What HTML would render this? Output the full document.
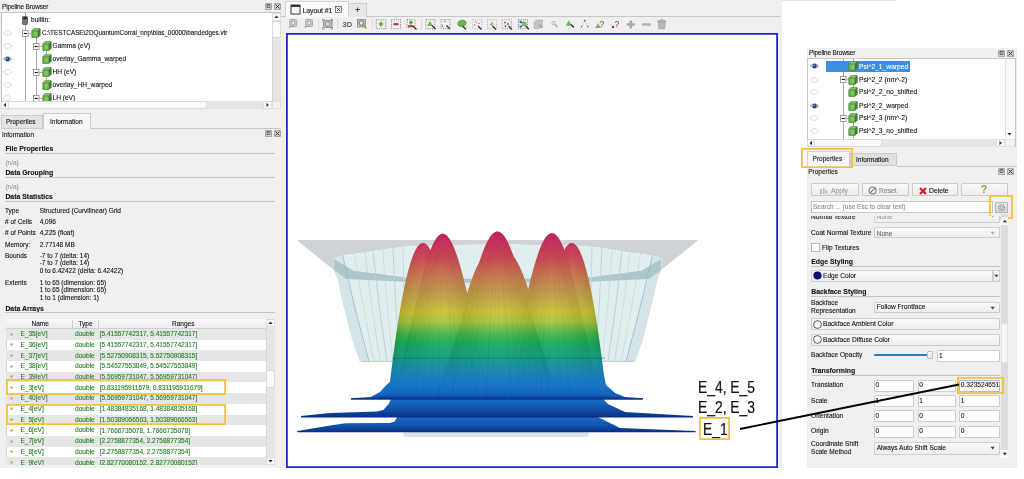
<!DOCTYPE html>
<html><head><meta charset="utf-8"><style>
html,body{margin:0;padding:0;}
body{width:1024px;height:479px;position:relative;overflow:hidden;background:#fff;font-family:"Liberation Sans", sans-serif;}
.t{position:absolute;white-space:nowrap;line-height:1;-webkit-text-stroke:0.1px currentColor;}
.r{position:absolute;}
svg.r{overflow:visible}
</style></head><body>
<div id="root" style="position:absolute;left:0;top:0;width:1024px;height:479px;will-change:transform">
<div class="r" style="left:0.00px;top:0.00px;width:782.00px;height:468.00px;background:#f0f0f0"></div>
<div class="r" style="left:782.00px;top:0.00px;width:114.00px;height:0.80px;background:#e6e6e6"></div>
<div class="t" style="left:2.00px;top:3.58px;font-size:6.4px;color:#111;font-weight:normal;letter-spacing:-0.1px;">Pipeline Browser</div>
<div class="r" style="left:265.00px;top:3.00px;width:7.00px;height:7.00px;background:#d4d4d4;border-radius:1.5px;box-shadow:inset 0 0 0 0.8px #9a9a9a"></div>
<div class="r" style="left:273.50px;top:3.00px;width:7.00px;height:7.00px;background:#d4d4d4;border-radius:1.5px;box-shadow:inset 0 0 0 0.8px #9a9a9a"></div>
<svg class="r" style="left:265px;top:3px" width="16" height="7"><path d="M2 4.5h3v-3h-3z M2 3.5l2.5-2" stroke="#555" stroke-width="0.8" fill="none"/><path d="M10.5 1.5l4 4M14.5 1.5l-4 4" stroke="#333" stroke-width="1"/></svg>
<div class="r" style="left:0.00px;top:11.50px;width:281.00px;height:1.00px;background:#dcdcdc"></div>
<div class="r" style="left:1.00px;top:12.00px;width:280.00px;height:97.00px;background:#fff;box-shadow:inset 0 0 0 1px #c4c4c4"></div>
<div class="r" style="left:272.00px;top:12.50px;width:9.00px;height:88.50px;background:#e6e6e6;box-shadow:inset 1px 0 0 #d8d8d8"></div>
<div class="r" style="left:272.00px;top:20.50px;width:9.00px;height:17.50px;background:#fafafa;box-shadow:inset 0 0 0 0.7px #d0d0d0"></div>
<div class="r" style="left:272.00px;top:12.50px;width:9.00px;height:8.00px;background:#fafafa;box-shadow:inset 0 0 0 0.7px #d4d4d4"></div>
<svg class="r" style="left:272px;top:12.5px" width="9" height="8"><path d="M2.3 5h4.4l-2.2-2.4z" fill="#333"/></svg>
<div class="r" style="left:1.00px;top:101.00px;width:271.00px;height:8.00px;background:#e6e6e6"></div>
<div class="r" style="left:8.00px;top:101.00px;width:199.00px;height:8.00px;background:#fafafa;box-shadow:inset 0 0 0 0.7px #d0d0d0"></div>
<div class="r" style="left:1.00px;top:101.00px;width:8.00px;height:8.00px;background:#fafafa;box-shadow:inset 0 0 0 0.7px #d4d4d4"></div>
<svg class="r" style="left:1px;top:101px" width="8" height="8"><path d="M5 1.7999999999999998v4.4l-2.4-2.2z" fill="#333"/></svg>
<div class="r" style="left:263.00px;top:101.00px;width:9.00px;height:8.00px;background:#fafafa;box-shadow:inset 0 0 0 0.7px #d4d4d4"></div>
<svg class="r" style="left:263px;top:101px" width="9" height="8"><path d="M3.5 1.7999999999999998v4.4l2.4-2.2z" fill="#333"/></svg>
<div class="r" style="left:272.00px;top:101.00px;width:9.00px;height:8.00px;background:#f2f2f2;box-shadow:inset 0 0 0 0.6px #d0d0d0"></div>
<div class="r" style="left:25.00px;top:12.00px;width:0.80px;height:89.00px;background:#a8a8a8"></div>
<div class="r" style="left:36.00px;top:37.00px;width:0.80px;height:64.00px;background:#a8a8a8"></div>
<div class="r" style="left:46.00px;top:51.00px;width:0.80px;height:8.00px;background:#a8a8a8"></div>
<div class="r" style="left:46.00px;top:77.00px;width:0.80px;height:8.00px;background:#a8a8a8"></div>
<svg class="r" style="left:22px;top:15.5px" width="6" height="9"><rect x="0.5" y="0.5" width="5" height="8" rx="0.8" fill="#777" stroke="#333" stroke-width="0.6"/><rect x="1.3" y="1.2" width="3.4" height="2" fill="#222"/></svg>
<div class="t" style="left:31.00px;top:17.21px;font-size:6.6px;color:#111;font-weight:normal;letter-spacing:0px;">builtin:</div>
<svg class="r" style="left:3px;top:29px" width="9" height="8"><ellipse cx="4.5" cy="4" rx="3.6" ry="2.3" fill="none" stroke="#b8b8b8" stroke-width="0.8" stroke-dasharray="1.2 0.6"/></svg>
<svg class="r" style="left:22px;top:29.5px" width="10" height="7"><path d="M6 3.5H9.5" stroke="#999" stroke-width="0.8"/><rect x="0.5" y="0.5" width="5.5" height="6" fill="#fff" stroke="#888" stroke-width="0.8"/><path d="M1.7 3.5H4.8" stroke="#111" stroke-width="1.1"/></svg>
<svg class="r" style="left:31px;top:28px" width="10" height="10"><path d="M0.8 2.6L3 0.6H9.2V7.2L7 9.4H0.8z" fill="#4f8f3a" stroke="#3c6e2c" stroke-width="0.5"/><path d="M0.8 2.6H7V9.4H0.8z" fill="#5ea846"/><path d="M2.5 4H6.2V8.4H2.5z" fill="#7cc65a"/><path d="M7 2.6L9.2 0.6V7.2L7 9.4z" fill="#3f7a2e"/><path d="M0.8 2.6L3 0.6H9.2L7 2.6z" fill="#86b872"/></svg>
<div class="t" style="left:42.00px;top:30.42px;font-size:6.35px;color:#111;font-weight:normal;letter-spacing:0px;">C:\TESTCASE\2DQuantumCorral_nnp\bias_00000\bandedges.vtr</div>
<svg class="r" style="left:3px;top:42px" width="9" height="8"><ellipse cx="4.5" cy="4" rx="3.6" ry="2.3" fill="none" stroke="#b8b8b8" stroke-width="0.8" stroke-dasharray="1.2 0.6"/></svg>
<svg class="r" style="left:33px;top:42.5px" width="10" height="7"><path d="M6 3.5H9.5" stroke="#999" stroke-width="0.8"/><rect x="0.5" y="0.5" width="5.5" height="6" fill="#fff" stroke="#888" stroke-width="0.8"/><path d="M1.7 3.5H4.8" stroke="#111" stroke-width="1.1"/></svg>
<svg class="r" style="left:42px;top:41px" width="10" height="10"><path d="M0.8 2.6L3 0.6H9.2V7.2L7 9.4H0.8z" fill="#4f8f3a" stroke="#3c6e2c" stroke-width="0.5"/><path d="M0.8 2.6H7V9.4H0.8z" fill="#5ea846"/><path d="M2.5 4H6.2V8.4H2.5z" fill="#7cc65a"/><path d="M7 2.6L9.2 0.6V7.2L7 9.4z" fill="#3f7a2e"/><path d="M0.8 2.6L3 0.6H9.2L7 2.6z" fill="#86b872"/></svg>
<div class="t" style="left:52.50px;top:43.21px;font-size:6.6px;color:#111;font-weight:normal;letter-spacing:0px;">Gamma (eV)</div>
<svg class="r" style="left:3px;top:55px" width="9" height="8"><path d="M0.5 4Q4.5 -0.5 8.5 4Q4.5 8.5 0.5 4z" fill="#e8eef5" stroke="#445" stroke-width="0.6"/><circle cx="4.6" cy="4" r="2.1" fill="#123a70"/><circle cx="4.2" cy="3.5" r="0.7" fill="#9cf"/></svg>
<svg class="r" style="left:42px;top:54px" width="10" height="10"><path d="M0.8 2.6L3 0.6H9.2V7.2L7 9.4H0.8z" fill="#4f8f3a" stroke="#3c6e2c" stroke-width="0.5"/><path d="M0.8 2.6H7V9.4H0.8z" fill="#5ea846"/><path d="M2.5 4H6.2V8.4H2.5z" fill="#7cc65a"/><path d="M7 2.6L9.2 0.6V7.2L7 9.4z" fill="#3f7a2e"/><path d="M0.8 2.6L3 0.6H9.2L7 2.6z" fill="#86b872"/></svg>
<div class="t" style="left:52.50px;top:56.21px;font-size:6.6px;color:#111;font-weight:normal;letter-spacing:0px;">overlay_Gamma_warped</div>
<svg class="r" style="left:3px;top:68px" width="9" height="8"><ellipse cx="4.5" cy="4" rx="3.6" ry="2.3" fill="none" stroke="#b8b8b8" stroke-width="0.8" stroke-dasharray="1.2 0.6"/></svg>
<svg class="r" style="left:33px;top:68.5px" width="10" height="7"><path d="M6 3.5H9.5" stroke="#999" stroke-width="0.8"/><rect x="0.5" y="0.5" width="5.5" height="6" fill="#fff" stroke="#888" stroke-width="0.8"/><path d="M1.7 3.5H4.8" stroke="#111" stroke-width="1.1"/></svg>
<svg class="r" style="left:42px;top:67px" width="10" height="10"><path d="M0.8 2.6L3 0.6H9.2V7.2L7 9.4H0.8z" fill="#4f8f3a" stroke="#3c6e2c" stroke-width="0.5"/><path d="M0.8 2.6H7V9.4H0.8z" fill="#5ea846"/><path d="M2.5 4H6.2V8.4H2.5z" fill="#7cc65a"/><path d="M7 2.6L9.2 0.6V7.2L7 9.4z" fill="#3f7a2e"/><path d="M0.8 2.6L3 0.6H9.2L7 2.6z" fill="#86b872"/></svg>
<div class="t" style="left:52.50px;top:69.21px;font-size:6.6px;color:#111;font-weight:normal;letter-spacing:0px;">HH (eV)</div>
<svg class="r" style="left:3px;top:81px" width="9" height="8"><ellipse cx="4.5" cy="4" rx="3.6" ry="2.3" fill="none" stroke="#b8b8b8" stroke-width="0.8" stroke-dasharray="1.2 0.6"/></svg>
<svg class="r" style="left:42px;top:80px" width="10" height="10"><path d="M0.8 2.6L3 0.6H9.2V7.2L7 9.4H0.8z" fill="#4f8f3a" stroke="#3c6e2c" stroke-width="0.5"/><path d="M0.8 2.6H7V9.4H0.8z" fill="#5ea846"/><path d="M2.5 4H6.2V8.4H2.5z" fill="#7cc65a"/><path d="M7 2.6L9.2 0.6V7.2L7 9.4z" fill="#3f7a2e"/><path d="M0.8 2.6L3 0.6H9.2L7 2.6z" fill="#86b872"/></svg>
<div class="t" style="left:52.50px;top:82.21px;font-size:6.6px;color:#111;font-weight:normal;letter-spacing:0px;">overlay_HH_warped</div>
<div class="r" style="left:1px;top:92px;width:271px;height:9px;overflow:hidden">
<div class="r" style="left:-1px;top:-92px;width:300px;height:200px">
<svg class="r" style="left:3px;top:94px" width="9" height="8"><ellipse cx="4.5" cy="4" rx="3.6" ry="2.3" fill="none" stroke="#b8b8b8" stroke-width="0.8" stroke-dasharray="1.2 0.6"/></svg>
<svg class="r" style="left:33px;top:94.5px" width="10" height="7"><path d="M6 3.5H9.5" stroke="#999" stroke-width="0.8"/><rect x="0.5" y="0.5" width="5.5" height="6" fill="#fff" stroke="#888" stroke-width="0.8"/><path d="M1.7 3.5H4.8" stroke="#111" stroke-width="1.1"/></svg>
<svg class="r" style="left:42px;top:93px" width="10" height="10"><path d="M0.8 2.6L3 0.6H9.2V7.2L7 9.4H0.8z" fill="#4f8f3a" stroke="#3c6e2c" stroke-width="0.5"/><path d="M0.8 2.6H7V9.4H0.8z" fill="#5ea846"/><path d="M2.5 4H6.2V8.4H2.5z" fill="#7cc65a"/><path d="M7 2.6L9.2 0.6V7.2L7 9.4z" fill="#3f7a2e"/><path d="M0.8 2.6L3 0.6H9.2L7 2.6z" fill="#86b872"/></svg>
<div class="t" style="left:52.50px;top:95.21px;font-size:6.6px;color:#111;font-weight:normal;letter-spacing:0px;">LH (eV)</div>
</div></div>
<div class="r" style="left:91.00px;top:128.00px;width:190.00px;height:0.80px;background:#c8c8c8"></div>
<div class="r" style="left:1.00px;top:114.50px;width:42.00px;height:14.00px;background:#e3e3e3;box-shadow:inset 0 0 0 0.8px #c4c4c4"></div>
<div class="r" style="left:43.00px;top:112.50px;width:48.00px;height:16.00px;background:#f7f7f7;box-shadow:inset 0.8px 0.8px 0 #c4c4c4,inset -0.8px 0 0 #c4c4c4"></div>
<div class="t" style="left:6.00px;top:118.70px;font-size:6.5px;color:#111;font-weight:normal;letter-spacing:0px;">Properties</div>
<div class="t" style="left:50.00px;top:118.50px;font-size:6.5px;color:#111;font-weight:normal;letter-spacing:0px;">Information</div>
<div class="t" style="left:2.00px;top:131.78px;font-size:6.4px;color:#111;font-weight:normal;letter-spacing:0px;">Information</div>
<div class="r" style="left:265.00px;top:130.00px;width:7.00px;height:7.00px;background:#d4d4d4;border-radius:1.5px;box-shadow:inset 0 0 0 0.8px #9a9a9a"></div>
<div class="r" style="left:273.50px;top:130.00px;width:7.00px;height:7.00px;background:#d4d4d4;border-radius:1.5px;box-shadow:inset 0 0 0 0.8px #9a9a9a"></div>
<svg class="r" style="left:265px;top:130px" width="16" height="7"><path d="M2 4.5h3v-3h-3z M2 3.5l2.5-2" stroke="#555" stroke-width="0.8" fill="none"/><path d="M10.5 1.5l4 4M14.5 1.5l-4 4" stroke="#333" stroke-width="1"/></svg>
<div class="t" style="left:5.40px;top:146.16px;font-size:6.9px;color:#111;font-weight:bold;letter-spacing:0px;">File Properties</div>
<div class="r" style="left:5.40px;top:152.80px;width:269.50px;height:1.00px;background:#c4c4c4"></div>
<div class="t" style="left:5.40px;top:159.50px;font-size:6.5px;color:#999;font-weight:normal;letter-spacing:0px;">(n/a)</div>
<div class="t" style="left:5.40px;top:170.16px;font-size:6.9px;color:#111;font-weight:bold;letter-spacing:0px;">Data Grouping</div>
<div class="r" style="left:5.40px;top:176.80px;width:269.50px;height:1.00px;background:#c4c4c4"></div>
<div class="t" style="left:5.40px;top:183.80px;font-size:6.5px;color:#999;font-weight:normal;letter-spacing:0px;">(n/a)</div>
<div class="t" style="left:5.40px;top:194.16px;font-size:6.9px;color:#111;font-weight:bold;letter-spacing:0px;">Data Statistics</div>
<div class="r" style="left:5.40px;top:200.80px;width:269.50px;height:1.00px;background:#c4c4c4"></div>
<div class="t" style="left:5.00px;top:207.70px;font-size:6.5px;color:#111;font-weight:normal;letter-spacing:0px;">Type</div>
<div class="t" style="left:39.70px;top:207.70px;font-size:6.5px;color:#111;font-weight:normal;letter-spacing:0px;">Structured (Curvilinear) Grid</div>
<div class="t" style="left:5.00px;top:219.00px;font-size:6.5px;color:#111;font-weight:normal;letter-spacing:0px;"># of Cells</div>
<div class="t" style="left:39.70px;top:219.00px;font-size:6.5px;color:#111;font-weight:normal;letter-spacing:0px;">4,096</div>
<div class="t" style="left:5.00px;top:230.30px;font-size:6.5px;color:#111;font-weight:normal;letter-spacing:0px;"># of Points</div>
<div class="t" style="left:39.70px;top:230.30px;font-size:6.5px;color:#111;font-weight:normal;letter-spacing:0px;">4,225 (float)</div>
<div class="t" style="left:5.00px;top:241.50px;font-size:6.5px;color:#111;font-weight:normal;letter-spacing:0px;">Memory:</div>
<div class="t" style="left:39.70px;top:241.50px;font-size:6.5px;color:#111;font-weight:normal;letter-spacing:0px;">2.77148 MB</div>
<div class="t" style="left:5.00px;top:252.70px;font-size:6.5px;color:#111;font-weight:normal;letter-spacing:0px;">Bounds</div>
<div class="t" style="left:39.70px;top:252.70px;font-size:6.5px;color:#111;font-weight:normal;letter-spacing:0px;">-7 to 7 (delta: 14)</div>
<div class="t" style="left:5.00px;top:260.30px;font-size:6.5px;color:#111;font-weight:normal;letter-spacing:0px;"></div>
<div class="t" style="left:39.70px;top:260.30px;font-size:6.5px;color:#111;font-weight:normal;letter-spacing:0px;">-7 to 7 (delta: 14)</div>
<div class="t" style="left:5.00px;top:268.10px;font-size:6.5px;color:#111;font-weight:normal;letter-spacing:0px;"></div>
<div class="t" style="left:39.70px;top:268.10px;font-size:6.5px;color:#111;font-weight:normal;letter-spacing:0px;">0 to 6.42422 (delta: 6.42422)</div>
<div class="t" style="left:5.00px;top:279.60px;font-size:6.5px;color:#111;font-weight:normal;letter-spacing:0px;">Extents</div>
<div class="t" style="left:39.70px;top:279.60px;font-size:6.5px;color:#111;font-weight:normal;letter-spacing:0px;">1 to 65 (dimension: 65)</div>
<div class="t" style="left:5.00px;top:287.10px;font-size:6.5px;color:#111;font-weight:normal;letter-spacing:0px;"></div>
<div class="t" style="left:39.70px;top:287.10px;font-size:6.5px;color:#111;font-weight:normal;letter-spacing:0px;">1 to 65 (dimension: 65)</div>
<div class="t" style="left:5.00px;top:295.10px;font-size:6.5px;color:#111;font-weight:normal;letter-spacing:0px;"></div>
<div class="t" style="left:39.70px;top:295.10px;font-size:6.5px;color:#111;font-weight:normal;letter-spacing:0px;">1 to 1 (dimension: 1)</div>
<div class="t" style="left:5.40px;top:305.66px;font-size:6.9px;color:#111;font-weight:bold;letter-spacing:0px;">Data Arrays</div>
<div class="r" style="left:5.40px;top:312.30px;width:269.50px;height:1.00px;background:#c4c4c4"></div>
<div class="r" style="left:5.70px;top:318.50px;width:269.30px;height:146.50px;background:#fff;box-shadow:inset 0 0 0 0.8px #c8c8c8"></div>
<div class="r" style="left:5.70px;top:318.50px;width:260.30px;height:10.20px;background:linear-gradient(#f8f8f8,#ececec);box-shadow:inset 0 -0.8px 0 #c8c8c8"></div>
<div class="r" style="left:72.00px;top:319.50px;width:0.80px;height:9.00px;background:#d0d0d0"></div>
<div class="r" style="left:98.00px;top:319.50px;width:0.80px;height:9.00px;background:#d0d0d0"></div>
<div class="t" style="left:31.50px;top:320.70px;font-size:6.5px;color:#111;font-weight:normal;letter-spacing:0px;">Name</div>
<div class="t" style="left:78.50px;top:320.70px;font-size:6.5px;color:#111;font-weight:normal;letter-spacing:0px;">Type</div>
<div class="t" style="left:172.00px;top:320.70px;font-size:6.5px;color:#111;font-weight:normal;letter-spacing:0px;">Ranges</div>
<div class="r" style="left:5.7px;top:328.7px;width:260.3px;height:136.3px;overflow:hidden">
<div class="r" style="left:0.00px;top:0.30px;width:260.30px;height:10.70px;background:#e6e6e6"></div>
<svg class="r" style="left:4.8px;top:3.9000000000000115px" width="3" height="3"><circle cx="1.5" cy="1.5" r="1.3" fill="#c0a860"/></svg>
<div class="t" style="left:14.70px;top:2.51px;font-size:6.6px;color:#1f801f;font-weight:normal;letter-spacing:0px;">E_35[eV]</div>
<div class="t" style="left:69.30px;top:2.51px;font-size:6.6px;color:#1f801f;font-weight:normal;letter-spacing:0px;">double</div>
<div class="t" style="left:94.00px;top:2.60px;font-size:6.5px;color:#1f801f;font-weight:normal;letter-spacing:0px;">[5.41557742317, 5.41557742317]</div>
<svg class="r" style="left:4.8px;top:14.6px" width="3" height="3"><circle cx="1.5" cy="1.5" r="1.3" fill="#c0a860"/></svg>
<div class="t" style="left:14.70px;top:13.21px;font-size:6.6px;color:#1f801f;font-weight:normal;letter-spacing:0px;">E_36[eV]</div>
<div class="t" style="left:69.30px;top:13.21px;font-size:6.6px;color:#1f801f;font-weight:normal;letter-spacing:0px;">double</div>
<div class="t" style="left:94.00px;top:13.30px;font-size:6.5px;color:#1f801f;font-weight:normal;letter-spacing:0px;">[5.41557742317, 5.41557742317]</div>
<div class="r" style="left:0.00px;top:21.70px;width:260.30px;height:10.70px;background:#e6e6e6"></div>
<svg class="r" style="left:4.8px;top:25.29999999999999px" width="3" height="3"><circle cx="1.5" cy="1.5" r="1.3" fill="#c0a860"/></svg>
<div class="t" style="left:14.70px;top:23.91px;font-size:6.6px;color:#1f801f;font-weight:normal;letter-spacing:0px;">E_37[eV]</div>
<div class="t" style="left:69.30px;top:23.91px;font-size:6.6px;color:#1f801f;font-weight:normal;letter-spacing:0px;">double</div>
<div class="t" style="left:94.00px;top:24.00px;font-size:6.5px;color:#1f801f;font-weight:normal;letter-spacing:0px;">[5.52750908315, 5.52750908315]</div>
<svg class="r" style="left:4.8px;top:36.000000000000036px" width="3" height="3"><circle cx="1.5" cy="1.5" r="1.3" fill="#c0a860"/></svg>
<div class="t" style="left:14.70px;top:34.61px;font-size:6.6px;color:#1f801f;font-weight:normal;letter-spacing:0px;">E_38[eV]</div>
<div class="t" style="left:69.30px;top:34.61px;font-size:6.6px;color:#1f801f;font-weight:normal;letter-spacing:0px;">double</div>
<div class="t" style="left:94.00px;top:34.70px;font-size:6.5px;color:#1f801f;font-weight:normal;letter-spacing:0px;">[5.54527553849, 5.54527553849]</div>
<div class="r" style="left:0.00px;top:43.10px;width:260.30px;height:10.70px;background:#e6e6e6"></div>
<svg class="r" style="left:4.8px;top:46.700000000000024px" width="3" height="3"><circle cx="1.5" cy="1.5" r="1.3" fill="#c0a860"/></svg>
<div class="t" style="left:14.70px;top:45.31px;font-size:6.6px;color:#1f801f;font-weight:normal;letter-spacing:0px;">E_39[eV]</div>
<div class="t" style="left:69.30px;top:45.31px;font-size:6.6px;color:#1f801f;font-weight:normal;letter-spacing:0px;">double</div>
<div class="t" style="left:94.00px;top:45.40px;font-size:6.5px;color:#1f801f;font-weight:normal;letter-spacing:0px;">[5.56959731047, 5.56959731047]</div>
<svg class="r" style="left:4.8px;top:57.40000000000001px" width="3" height="3"><circle cx="1.5" cy="1.5" r="1.3" fill="#c0a860"/></svg>
<div class="t" style="left:14.70px;top:56.01px;font-size:6.6px;color:#1f801f;font-weight:normal;letter-spacing:0px;">E_3[eV]</div>
<div class="t" style="left:69.30px;top:56.01px;font-size:6.6px;color:#1f801f;font-weight:normal;letter-spacing:0px;">double</div>
<div class="t" style="left:94.00px;top:56.10px;font-size:6.5px;color:#1f801f;font-weight:normal;letter-spacing:0px;">[0.831195911679, 0.831195911679]</div>
<div class="r" style="left:0.00px;top:64.50px;width:260.30px;height:10.70px;background:#e6e6e6"></div>
<svg class="r" style="left:4.8px;top:68.1px" width="3" height="3"><circle cx="1.5" cy="1.5" r="1.3" fill="#c0a860"/></svg>
<div class="t" style="left:14.70px;top:66.71px;font-size:6.6px;color:#1f801f;font-weight:normal;letter-spacing:0px;">E_40[eV]</div>
<div class="t" style="left:69.30px;top:66.71px;font-size:6.6px;color:#1f801f;font-weight:normal;letter-spacing:0px;">double</div>
<div class="t" style="left:94.00px;top:66.80px;font-size:6.5px;color:#1f801f;font-weight:normal;letter-spacing:0px;">[5.56959731047, 5.56959731047]</div>
<svg class="r" style="left:4.8px;top:78.79999999999998px" width="3" height="3"><circle cx="1.5" cy="1.5" r="1.3" fill="#c0a860"/></svg>
<div class="t" style="left:14.70px;top:77.41px;font-size:6.6px;color:#1f801f;font-weight:normal;letter-spacing:0px;">E_4[eV]</div>
<div class="t" style="left:69.30px;top:77.41px;font-size:6.6px;color:#1f801f;font-weight:normal;letter-spacing:0px;">double</div>
<div class="t" style="left:94.00px;top:77.50px;font-size:6.5px;color:#1f801f;font-weight:normal;letter-spacing:0px;">[1.48384835168, 1.48384835168]</div>
<div class="r" style="left:0.00px;top:85.90px;width:260.30px;height:10.70px;background:#e6e6e6"></div>
<svg class="r" style="left:4.8px;top:89.50000000000003px" width="3" height="3"><circle cx="1.5" cy="1.5" r="1.3" fill="#c0a860"/></svg>
<div class="t" style="left:14.70px;top:88.11px;font-size:6.6px;color:#1f801f;font-weight:normal;letter-spacing:0px;">E_5[eV]</div>
<div class="t" style="left:69.30px;top:88.11px;font-size:6.6px;color:#1f801f;font-weight:normal;letter-spacing:0px;">double</div>
<div class="t" style="left:94.00px;top:88.20px;font-size:6.5px;color:#1f801f;font-weight:normal;letter-spacing:0px;">[1.50389066563, 1.50389066563]</div>
<svg class="r" style="left:4.8px;top:100.20000000000002px" width="3" height="3"><circle cx="1.5" cy="1.5" r="1.3" fill="#c0a860"/></svg>
<div class="t" style="left:14.70px;top:98.81px;font-size:6.6px;color:#1f801f;font-weight:normal;letter-spacing:0px;">E_6[eV]</div>
<div class="t" style="left:69.30px;top:98.81px;font-size:6.6px;color:#1f801f;font-weight:normal;letter-spacing:0px;">double</div>
<div class="t" style="left:94.00px;top:98.90px;font-size:6.5px;color:#1f801f;font-weight:normal;letter-spacing:0px;">[1.7666735078, 1.7666735078]</div>
<div class="r" style="left:0.00px;top:107.30px;width:260.30px;height:10.70px;background:#e6e6e6"></div>
<svg class="r" style="left:4.8px;top:110.9px" width="3" height="3"><circle cx="1.5" cy="1.5" r="1.3" fill="#c0a860"/></svg>
<div class="t" style="left:14.70px;top:109.51px;font-size:6.6px;color:#1f801f;font-weight:normal;letter-spacing:0px;">E_7[eV]</div>
<div class="t" style="left:69.30px;top:109.51px;font-size:6.6px;color:#1f801f;font-weight:normal;letter-spacing:0px;">double</div>
<div class="t" style="left:94.00px;top:109.60px;font-size:6.5px;color:#1f801f;font-weight:normal;letter-spacing:0px;">[2.2758877354, 2.2758877354]</div>
<svg class="r" style="left:4.8px;top:121.6px" width="3" height="3"><circle cx="1.5" cy="1.5" r="1.3" fill="#c0a860"/></svg>
<div class="t" style="left:14.70px;top:120.21px;font-size:6.6px;color:#1f801f;font-weight:normal;letter-spacing:0px;">E_8[eV]</div>
<div class="t" style="left:69.30px;top:120.21px;font-size:6.6px;color:#1f801f;font-weight:normal;letter-spacing:0px;">double</div>
<div class="t" style="left:94.00px;top:120.30px;font-size:6.5px;color:#1f801f;font-weight:normal;letter-spacing:0px;">[2.2758877354, 2.2758877354]</div>
<div class="r" style="left:0.00px;top:128.70px;width:260.30px;height:10.70px;background:#e6e6e6"></div>
<svg class="r" style="left:4.8px;top:132.29999999999998px" width="3" height="3"><circle cx="1.5" cy="1.5" r="1.3" fill="#c0a860"/></svg>
<div class="t" style="left:14.70px;top:130.91px;font-size:6.6px;color:#1f801f;font-weight:normal;letter-spacing:0px;">E_9[eV]</div>
<div class="t" style="left:69.30px;top:130.91px;font-size:6.6px;color:#1f801f;font-weight:normal;letter-spacing:0px;">double</div>
<div class="t" style="left:94.00px;top:131.00px;font-size:6.5px;color:#1f801f;font-weight:normal;letter-spacing:0px;">[2.82770080152, 2.82770080152]</div>
</div>
<div class="r" style="left:266.00px;top:318.50px;width:9.00px;height:146.50px;background:#e6e6e6;box-shadow:inset 1px 0 0 #d8d8d8"></div>
<div class="r" style="left:266.00px;top:370.00px;width:9.00px;height:18.00px;background:#fafafa;box-shadow:inset 0 0 0 0.7px #d0d0d0"></div>
<div class="r" style="left:266.00px;top:318.50px;width:9.00px;height:8.00px;background:#fafafa;box-shadow:inset 0 0 0 0.7px #d4d4d4"></div>
<svg class="r" style="left:266px;top:318.5px" width="9" height="8"><path d="M2.3 5h4.4l-2.2-2.4z" fill="#333"/></svg>
<div class="r" style="left:266.00px;top:456.50px;width:9.00px;height:8.50px;background:#fafafa;box-shadow:inset 0 0 0 0.7px #d4d4d4"></div>
<svg class="r" style="left:266px;top:456.5px" width="9" height="8"><path d="M2.3 3h4.4l-2.2 2.4z" fill="#333"/></svg>
<div class="r" style="left:5.70px;top:379.30px;width:220.00px;height:15.30px;box-shadow:inset 0 0 0 1.8px #f2c23c"></div>
<div class="r" style="left:5.70px;top:404.00px;width:220.00px;height:20.60px;box-shadow:inset 0 0 0 1.8px #f2c23c"></div>
<div class="r" style="left:367.00px;top:16.00px;width:413.00px;height:0.80px;background:#c8c8c8"></div>
<div class="r" style="left:281.00px;top:16.00px;width:4.00px;height:0.80px;background:#c8c8c8"></div>
<div class="r" style="left:285.00px;top:1.00px;width:64.00px;height:16.00px;background:#fbfbfb;box-shadow:inset 0.8px 0.8px 0 #c8c8c8,inset -0.8px 0 0 #c8c8c8"></div>
<div class="r" style="left:349.00px;top:2.50px;width:18.00px;height:14.00px;background:#e8e8e8;box-shadow:inset 0 0.8px 0 #c8c8c8,inset -0.8px 0 0 #c8c8c8"></div>
<svg class="r" style="left:290px;top:3.5px" width="11" height="11"><rect x="1" y="1" width="9" height="9" fill="none" stroke="#333" stroke-width="1"/><rect x="1" y="1" width="9" height="2" fill="#333"/></svg>
<div class="t" style="left:302.50px;top:7.07px;font-size:7px;color:#111;font-weight:normal;letter-spacing:-0.1px;">Layout #1</div>
<svg class="r" style="left:334.5px;top:6px" width="7" height="7"><rect x="0.5" y="0.5" width="6" height="6" fill="#f4f4f4" stroke="#555" stroke-width="0.7"/><path d="M1.8 1.8l3.4 3.4M5.2 1.8l-3.4 3.4" stroke="#333" stroke-width="0.8"/></svg>
<div class="t" style="left:355.30px;top:6.40px;font-size:8.5px;color:#111;font-weight:normal;letter-spacing:0px;">+</div>
<svg class="r" style="left:0;top:0" width="1024" height="40"><rect x="289.7" y="19.5" width="7" height="7" rx="1" fill="#c8c8c8" stroke="#a8a8a8" stroke-width="0.9"/><circle cx="293.2" cy="23" r="1.8" fill="#e8e8e8" stroke="#999" stroke-width="0.7"/><path d="M288.7 27.8 q2 -2.5 4.5 -1" stroke="#999" stroke-width="1.1" fill="none"/><rect x="305.5" y="19.5" width="7" height="7" rx="1" fill="#c8c8c8" stroke="#a8a8a8" stroke-width="0.9"/><circle cx="309" cy="23" r="1.8" fill="#e8e8e8" stroke="#999" stroke-width="0.7"/><path d="M304.5 27.8 q2 -2.5 4.5 -1" stroke="#999" stroke-width="1.1" fill="none"/><rect x="318.3" y="19" width="0.8" height="10" fill="#d4d4d4"/><rect x="323.5" y="20.5" width="8.5" height="7" rx="1" fill="#b8b8b8" stroke="#8a8a8a" stroke-width="0.9"/><circle cx="327.7" cy="24" r="2" fill="#e8e8e8" stroke="#777" stroke-width="0.7"/><path d="M322.5 21.5v-2h2M330.5 19.5h2v2M332.5 27v2h-2M324.5 29h-2v-2" stroke="#666" stroke-width="0.6" fill="none"/><rect x="337.4" y="19" width="0.8" height="10" fill="#d4d4d4"/><text x="342.5" y="27.2" font-family="Liberation Sans" font-weight="bold" font-size="7.6" fill="#5a5a5a">3D</text><rect x="357.5" y="19.5" width="8" height="7.5" fill="#b8bcc4" stroke="#8a8a8a" stroke-width="0.8"/><circle cx="361.3" cy="23" r="2.2" fill="#dfe6ee" stroke="#666" stroke-width="0.8"/><path d="M363 24.8l3.4 3.6" stroke="#b89030" stroke-width="1.5"/><rect x="371.8" y="19" width="0.8" height="10" fill="#d4d4d4"/><rect x="376.3" y="19.7" width="9.5" height="9" fill="none" stroke="#777" stroke-width="0.9" stroke-dasharray="1 1.2"/><path d="M381 21.3l2.6 2.8 -2.6 2.8 -2.6 -2.8z" fill="#78b050"/><rect x="391.5" y="19.7" width="9" height="9" fill="none" stroke="#777" stroke-width="0.9" stroke-dasharray="1 1.2"/><rect x="393.5" y="23.2" width="5" height="2" fill="#d02030"/><rect x="407.0" y="19.7" width="8" height="8" fill="none" stroke="#777" stroke-width="0.9" stroke-dasharray="1 1.2"/><path d="M409 22.5h4M411 20.5v4" stroke="#58a040" stroke-width="1.6"/><rect x="408" y="25.2" width="5" height="1.8" fill="#c03030"/><path d="M413 26l3.5 3.5" stroke="#333" stroke-width="1.3"/><rect x="421.3" y="19" width="0.8" height="10" fill="#d4d4d4"/><rect x="425.9" y="19.7" width="9" height="9" fill="none" stroke="#777" stroke-width="0.9" stroke-dasharray="1 1.2"/><path d="M430 21l3 5h-6z" fill="#70b050"/><path d="M432 25.5l3.5 3.5" stroke="#333" stroke-width="1.3"/><rect x="441.1" y="19.7" width="9" height="9" fill="none" stroke="#777" stroke-width="0.9" stroke-dasharray="1 1.2"/><circle cx="445" cy="21.5" r="0.7" fill="#555"/><circle cx="442.5" cy="26" r="0.7" fill="#555"/><path d="M446.5 25.5l3.5 3.5" stroke="#333" stroke-width="1.3"/><path d="M457.5 23.5q1-3.5 5-3.5q3.5 0 3.8 2.5q0 3.5-4.8 4.2q-3.5 0.2-4-3.2z" fill="#70b050" stroke="#589a40" stroke-width="0.6"/><path d="M462.5 26l3.5 3.5" stroke="#333" stroke-width="1.3"/><rect x="472.8" y="19.7" width="9" height="9" fill="none" stroke="#b0b0b0" stroke-width="0.9" stroke-dasharray="1 1.2"/><circle cx="476" cy="22" r="0.7" fill="#d05040"/><circle cx="474.5" cy="25" r="0.7" fill="#d05040"/><circle cx="479" cy="23.5" r="0.7" fill="#d05040"/><path d="M478 26l3.5 3.5" stroke="#333" stroke-width="1.3"/><rect x="487.5" y="19.7" width="9" height="9" fill="none" stroke="#a8a8a8" stroke-width="0.9" stroke-dasharray="1 1.2"/><path d="M493 21.5l-3.5 3 3 1.5" fill="#80b860"/><path d="M492.5 26l3.5 3.5" stroke="#333" stroke-width="1.3"/><rect x="502.0" y="19.7" width="9.5" height="9" fill="none" stroke="#999" stroke-width="0.9" stroke-dasharray="1 1.2"/><circle cx="505" cy="22.5" r="0.9" fill="#c04040"/><circle cx="508" cy="24" r="0.9" fill="#555"/><circle cx="505.5" cy="26" r="0.9" fill="#c04040"/><path d="M508.5 26l3.5 3.5" stroke="#333" stroke-width="1.3"/><rect x="518.5" y="19.7" width="9" height="9" fill="none" stroke="#666" stroke-width="0.9" stroke-dasharray="1 1.2"/><circle cx="520.8" cy="22" r="1.3" fill="#2a7a9a"/><circle cx="520.8" cy="26.5" r="1.3" fill="#2a7a9a"/><circle cx="524" cy="23.8" r="2" fill="#8ac070" stroke="#3a7a3a" stroke-width="0.6"/><path d="M525.5 25.8l3.5 3.5" stroke="#333" stroke-width="1.3"/><path d="M534 22l3-2h5.5v6l-3 2.5h-5.5z" fill="#c4c4c4" stroke="#a8a8a8" stroke-width="0.6"/><path d="M539 24.5l3.5 3.5" stroke="#999" stroke-width="1.2"/><circle cx="553.5" cy="23" r="1.6" fill="none" stroke="#aaa" stroke-width="0.8"/><path d="M554.8 24.3l2.8 2.8" stroke="#999" stroke-width="1.1"/><path d="M568.8 20.5l3 5.2h-6z" fill="#70b050"/><path d="M571 24.5l3 3" stroke="#333" stroke-width="1.2"/><circle cx="584.8" cy="20.5" r="0.7" fill="#444"/><circle cx="581.5" cy="26.8" r="0.7" fill="#444"/><circle cx="588" cy="26.8" r="0.7" fill="#444"/><path d="M584.8 21l-3 5.5M584.8 21l3 5.5" stroke="#777" stroke-width="0.5" stroke-dasharray="0.8 0.8"/><path d="M598 23l3 5h-6z" fill="#80b860"/><text x="599.5" y="26.5" font-family="Liberation Sans" font-size="8.5" fill="#555">?</text><circle cx="613" cy="27" r="1.2" fill="#d02020"/><text x="614.5" y="26.5" font-family="Liberation Sans" font-size="8.5" fill="#555">?</text><path d="M630.8 20.5v8M626.8 24.5h8" stroke="#a8a8a8" stroke-width="2.6"/><path d="M642 24.5h8.8" stroke="#b0b0b0" stroke-width="2.4"/><path d="M658 22h7.5l-0.8 7h-6z" fill="#b8b8b8" stroke="#a4a4a4" stroke-width="0.6"/><rect x="657.3" y="20.2" width="8.8" height="1.8" rx="0.6" fill="#aaa"/><rect x="660" y="19.3" width="3.3" height="1.2" fill="#aaa"/></svg>
<div class="r" style="left:285.50px;top:32.50px;width:492.50px;height:435.00px;background:#fff;box-shadow:inset 0 0 0 1.8px #2424c8"></div>
<div class="r" style="left:806.50px;top:48.00px;width:210.00px;height:420.00px;background:#f0f0f0"></div>
<div class="t" style="left:809.00px;top:50.48px;font-size:6.4px;color:#111;font-weight:normal;letter-spacing:-0.1px;">Pipeline Browser</div>
<div class="r" style="left:998.00px;top:50.00px;width:7.00px;height:7.00px;background:#d4d4d4;border-radius:1.5px;box-shadow:inset 0 0 0 0.8px #9a9a9a"></div>
<div class="r" style="left:1006.50px;top:50.00px;width:7.00px;height:7.00px;background:#d4d4d4;border-radius:1.5px;box-shadow:inset 0 0 0 0.8px #9a9a9a"></div>
<svg class="r" style="left:998px;top:50px" width="16" height="7"><path d="M2 4.5h3v-3h-3z M2 3.5l2.5-2" stroke="#555" stroke-width="0.8" fill="none"/><path d="M10.5 1.5l4 4M14.5 1.5l-4 4" stroke="#333" stroke-width="1"/></svg>
<div class="r" style="left:806.50px;top:57.50px;width:210.00px;height:0.80px;background:#dcdcdc"></div>
<div class="r" style="left:806.50px;top:58.00px;width:209.00px;height:89.00px;background:#fff;box-shadow:inset 0 0 0 1px #c8c8c8"></div>
<div class="r" style="left:1005.00px;top:58.50px;width:9.50px;height:80.00px;background:#fafafa;box-shadow:inset 0.7px 0 0 #d8d8d8"></div>
<svg class="r" style="left:1005px;top:130px" width="9" height="8"><path d="M2.3 3h4.4l-2.2 2.4z" fill="#333"/></svg>
<div class="r" style="left:806.50px;top:138.50px;width:198.50px;height:8.00px;background:#e6e6e6"></div>
<div class="r" style="left:814.00px;top:138.50px;width:68.00px;height:8.00px;background:#fafafa;box-shadow:inset 0 0 0 0.7px #d0d0d0"></div>
<div class="r" style="left:806.50px;top:138.50px;width:8.00px;height:8.00px;background:#fafafa;box-shadow:inset 0 0 0 0.7px #d4d4d4"></div>
<svg class="r" style="left:806.5px;top:138.5px" width="8" height="8"><path d="M5 1.7999999999999998v4.4l-2.4-2.2z" fill="#333"/></svg>
<div class="r" style="left:996.00px;top:138.50px;width:9.00px;height:8.00px;background:#fafafa;box-shadow:inset 0 0 0 0.7px #d4d4d4"></div>
<svg class="r" style="left:996.0px;top:138.5px" width="9" height="8"><path d="M3.5 1.7999999999999998v4.4l2.4-2.2z" fill="#333"/></svg>
<div class="r" style="left:1005.00px;top:138.50px;width:9.50px;height:8.00px;background:#f4f4f4;box-shadow:inset 0 0 0 0.6px #d8d8d8"></div>
<div class="r" style="left:842.50px;top:58.50px;width:0.80px;height:80.00px;background:#a8a8a8"></div>
<div class="r" style="left:853.00px;top:58.50px;width:0.80px;height:3.00px;background:#a8a8a8"></div>
<div class="r" style="left:853.00px;top:84.00px;width:0.80px;height:8.00px;background:#a8a8a8"></div>
<div class="r" style="left:853.00px;top:123.00px;width:0.80px;height:15.00px;background:#a8a8a8"></div>
<div class="r" style="left:826.00px;top:61.30px;width:84.00px;height:10.30px;background:#3a8fe0"></div>
<svg class="r" style="left:810px;top:62.400000000000006px" width="9" height="8"><path d="M0.5 4Q4.5 -0.5 8.5 4Q4.5 8.5 0.5 4z" fill="#e8eef5" stroke="#445" stroke-width="0.6"/><circle cx="4.6" cy="4" r="2.1" fill="#123a70"/><circle cx="4.2" cy="3.5" r="0.7" fill="#9cf"/></svg>
<svg class="r" style="left:848px;top:61.400000000000006px" width="10" height="10"><path d="M0.8 2.6L3 0.6H9.2V7.2L7 9.4H0.8z" fill="#4f8f3a" stroke="#3c6e2c" stroke-width="0.5"/><path d="M0.8 2.6H7V9.4H0.8z" fill="#5ea846"/><path d="M2.5 4H6.2V8.4H2.5z" fill="#7cc65a"/><path d="M7 2.6L9.2 0.6V7.2L7 9.4z" fill="#3f7a2e"/><path d="M0.8 2.6L3 0.6H9.2L7 2.6z" fill="#86b872"/></svg>
<div class="t" style="left:859.00px;top:63.53px;font-size:6.7px;color:#fff;font-weight:normal;letter-spacing:0px;">Psi^2_1_warped</div>
<svg class="r" style="left:810px;top:75.6px" width="9" height="8"><ellipse cx="4.5" cy="4" rx="3.6" ry="2.3" fill="none" stroke="#b8b8b8" stroke-width="0.8" stroke-dasharray="1.2 0.6"/></svg>
<svg class="r" style="left:840px;top:76.1px" width="10" height="7"><path d="M6 3.5H9.5" stroke="#999" stroke-width="0.8"/><rect x="0.5" y="0.5" width="5.5" height="6" fill="#fff" stroke="#888" stroke-width="0.8"/><path d="M1.7 3.5H4.8" stroke="#111" stroke-width="1.1"/></svg>
<svg class="r" style="left:848px;top:74.6px" width="10" height="10"><path d="M0.8 2.6L3 0.6H9.2V7.2L7 9.4H0.8z" fill="#4f8f3a" stroke="#3c6e2c" stroke-width="0.5"/><path d="M0.8 2.6H7V9.4H0.8z" fill="#5ea846"/><path d="M2.5 4H6.2V8.4H2.5z" fill="#7cc65a"/><path d="M7 2.6L9.2 0.6V7.2L7 9.4z" fill="#3f7a2e"/><path d="M0.8 2.6L3 0.6H9.2L7 2.6z" fill="#86b872"/></svg>
<div class="t" style="left:859.00px;top:76.73px;font-size:6.7px;color:#111;font-weight:normal;letter-spacing:0px;">Psi^2_2 (nm^-2)</div>
<svg class="r" style="left:810px;top:88px" width="9" height="8"><ellipse cx="4.5" cy="4" rx="3.6" ry="2.3" fill="none" stroke="#b8b8b8" stroke-width="0.8" stroke-dasharray="1.2 0.6"/></svg>
<svg class="r" style="left:848px;top:87px" width="10" height="10"><path d="M0.8 2.6L3 0.6H9.2V7.2L7 9.4H0.8z" fill="#4f8f3a" stroke="#3c6e2c" stroke-width="0.5"/><path d="M0.8 2.6H7V9.4H0.8z" fill="#5ea846"/><path d="M2.5 4H6.2V8.4H2.5z" fill="#7cc65a"/><path d="M7 2.6L9.2 0.6V7.2L7 9.4z" fill="#3f7a2e"/><path d="M0.8 2.6L3 0.6H9.2L7 2.6z" fill="#86b872"/></svg>
<div class="t" style="left:859.00px;top:89.13px;font-size:6.7px;color:#111;font-weight:normal;letter-spacing:0px;">Psi^2_2_no_shifted</div>
<svg class="r" style="left:810px;top:101.5px" width="9" height="8"><path d="M0.5 4Q4.5 -0.5 8.5 4Q4.5 8.5 0.5 4z" fill="#e8eef5" stroke="#445" stroke-width="0.6"/><circle cx="4.6" cy="4" r="2.1" fill="#123a70"/><circle cx="4.2" cy="3.5" r="0.7" fill="#9cf"/></svg>
<svg class="r" style="left:848px;top:100.5px" width="10" height="10"><path d="M0.8 2.6L3 0.6H9.2V7.2L7 9.4H0.8z" fill="#4f8f3a" stroke="#3c6e2c" stroke-width="0.5"/><path d="M0.8 2.6H7V9.4H0.8z" fill="#5ea846"/><path d="M2.5 4H6.2V8.4H2.5z" fill="#7cc65a"/><path d="M7 2.6L9.2 0.6V7.2L7 9.4z" fill="#3f7a2e"/><path d="M0.8 2.6L3 0.6H9.2L7 2.6z" fill="#86b872"/></svg>
<div class="t" style="left:859.00px;top:102.63px;font-size:6.7px;color:#111;font-weight:normal;letter-spacing:0px;">Psi^2_2_warped</div>
<svg class="r" style="left:810px;top:114px" width="9" height="8"><ellipse cx="4.5" cy="4" rx="3.6" ry="2.3" fill="none" stroke="#b8b8b8" stroke-width="0.8" stroke-dasharray="1.2 0.6"/></svg>
<svg class="r" style="left:840px;top:114.5px" width="10" height="7"><path d="M6 3.5H9.5" stroke="#999" stroke-width="0.8"/><rect x="0.5" y="0.5" width="5.5" height="6" fill="#fff" stroke="#888" stroke-width="0.8"/><path d="M1.7 3.5H4.8" stroke="#111" stroke-width="1.1"/></svg>
<svg class="r" style="left:848px;top:113px" width="10" height="10"><path d="M0.8 2.6L3 0.6H9.2V7.2L7 9.4H0.8z" fill="#4f8f3a" stroke="#3c6e2c" stroke-width="0.5"/><path d="M0.8 2.6H7V9.4H0.8z" fill="#5ea846"/><path d="M2.5 4H6.2V8.4H2.5z" fill="#7cc65a"/><path d="M7 2.6L9.2 0.6V7.2L7 9.4z" fill="#3f7a2e"/><path d="M0.8 2.6L3 0.6H9.2L7 2.6z" fill="#86b872"/></svg>
<div class="t" style="left:859.00px;top:115.13px;font-size:6.7px;color:#111;font-weight:normal;letter-spacing:0px;">Psi^2_3 (nm^-2)</div>
<svg class="r" style="left:810px;top:127px" width="9" height="8"><ellipse cx="4.5" cy="4" rx="3.6" ry="2.3" fill="none" stroke="#b8b8b8" stroke-width="0.8" stroke-dasharray="1.2 0.6"/></svg>
<svg class="r" style="left:848px;top:126px" width="10" height="10"><path d="M0.8 2.6L3 0.6H9.2V7.2L7 9.4H0.8z" fill="#4f8f3a" stroke="#3c6e2c" stroke-width="0.5"/><path d="M0.8 2.6H7V9.4H0.8z" fill="#5ea846"/><path d="M2.5 4H6.2V8.4H2.5z" fill="#7cc65a"/><path d="M7 2.6L9.2 0.6V7.2L7 9.4z" fill="#3f7a2e"/><path d="M0.8 2.6L3 0.6H9.2L7 2.6z" fill="#86b872"/></svg>
<div class="t" style="left:859.00px;top:128.13px;font-size:6.7px;color:#111;font-weight:normal;letter-spacing:0px;">Psi^2_3_no_shifted</div>
<div class="r" style="left:896.50px;top:165.50px;width:120.00px;height:0.80px;background:#c8c8c8"></div>
<div class="r" style="left:850.00px;top:152.60px;width:46.50px;height:13.00px;background:#e0e0e0;box-shadow:inset 0 0 0 0.8px #c4c4c4"></div>
<div class="r" style="left:806.50px;top:151.30px;width:43.50px;height:15.00px;background:#f7f7f7;box-shadow:inset 0.8px 0.8px 0 #c4c4c4,inset -0.8px 0 0 #c4c4c4"></div>
<div class="t" style="left:812.60px;top:155.70px;font-size:6.5px;color:#111;font-weight:normal;letter-spacing:0px;">Properties</div>
<div class="t" style="left:856.00px;top:156.50px;font-size:6.5px;color:#111;font-weight:normal;letter-spacing:0px;">Information</div>
<div class="r" style="left:800.70px;top:147.90px;width:52.60px;height:20.30px;box-shadow:inset 0 0 0 1.8px #f2c23c"></div>
<div class="t" style="left:808.20px;top:168.70px;font-size:6.5px;color:#111;font-weight:normal;letter-spacing:0px;">Properties</div>
<div class="r" style="left:998.00px;top:168.00px;width:7.00px;height:7.00px;background:#d4d4d4;border-radius:1.5px;box-shadow:inset 0 0 0 0.8px #9a9a9a"></div>
<div class="r" style="left:1006.50px;top:168.00px;width:7.00px;height:7.00px;background:#d4d4d4;border-radius:1.5px;box-shadow:inset 0 0 0 0.8px #9a9a9a"></div>
<svg class="r" style="left:998px;top:168px" width="16" height="7"><path d="M2 4.5h3v-3h-3z M2 3.5l2.5-2" stroke="#555" stroke-width="0.8" fill="none"/><path d="M10.5 1.5l4 4M14.5 1.5l-4 4" stroke="#333" stroke-width="1"/></svg>
<div class="r" style="left:811.40px;top:182.50px;width:47.60px;height:13.50px;background:linear-gradient(#fafafa,#ececec);border-radius:1.5px;box-shadow:inset 0 0 0 0.8px #c0c0c0"></div>
<div class="r" style="left:861.70px;top:182.50px;width:47.30px;height:13.50px;background:linear-gradient(#fafafa,#ececec);border-radius:1.5px;box-shadow:inset 0 0 0 0.8px #c0c0c0"></div>
<div class="r" style="left:911.60px;top:182.50px;width:46.40px;height:13.50px;background:linear-gradient(#fafafa,#ececec);border-radius:1.5px;box-shadow:inset 0 0 0 0.8px #c0c0c0"></div>
<div class="r" style="left:960.80px;top:182.50px;width:47.50px;height:13.50px;background:linear-gradient(#fafafa,#ececec);border-radius:1.5px;box-shadow:inset 0 0 0 0.8px #c0c0c0"></div>
<svg class="r" style="left:818px;top:186px" width="10" height="9"><path d="M2 8V3h2v5zM5 8V1.5h1.5V8zM7.5 8V4H9v4z" fill="#bbb"/></svg>
<div class="t" style="left:831.00px;top:187.84px;font-size:6.8px;color:#9a9a9a;font-weight:normal;letter-spacing:0px;">Apply</div>
<svg class="r" style="left:868px;top:185.5px" width="9" height="9"><circle cx="4.5" cy="4.5" r="3.5" fill="none" stroke="#777" stroke-width="1.1"/><path d="M2.2 6.8L6.8 2.2" stroke="#777" stroke-width="1.1"/></svg>
<div class="t" style="left:879.00px;top:187.84px;font-size:6.8px;color:#888;font-weight:normal;letter-spacing:0px;">Reset</div>
<svg class="r" style="left:919px;top:186.5px" width="8" height="8"><path d="M1 1L7 7M7 1L1 7" stroke="#d0202a" stroke-width="2.2"/></svg>
<div class="t" style="left:929.00px;top:187.84px;font-size:6.8px;color:#111;font-weight:normal;letter-spacing:0px;">Delete</div>
<div class="t" style="left:981.00px;top:185.03px;font-size:10px;color:#7ab040;font-weight:bold;letter-spacing:0px;">?</div>
<div class="r" style="left:811.40px;top:200.50px;width:181.50px;height:12.00px;background:#fff;box-shadow:inset 0 0 0 0.8px #b8b8b8"></div>
<div class="t" style="left:813.00px;top:203.80px;font-size:6.5px;color:#8a8a8a;font-weight:normal;letter-spacing:0px;">Search ... (use Esc to clear text)</div>
<div class="r" style="left:994.50px;top:201.50px;width:13.50px;height:11.50px;background:linear-gradient(#e6e6e6,#d2d2d2);border-radius:1.5px;box-shadow:inset 0 0 0 0.8px #aaa"></div>
<svg class="r" style="left:996.5px;top:203px" width="9" height="9"><circle cx="4.5" cy="4.5" r="2.8" fill="none" stroke="#999" stroke-width="1.4" stroke-dasharray="1.1 0.7"/><circle cx="4.5" cy="4.5" r="1.2" fill="none" stroke="#999" stroke-width="0.7"/></svg>
<div class="r" style="left:988.60px;top:195.40px;width:24.10px;height:23.20px;box-shadow:inset 0 0 0 1.8px #f2c23c"></div>
<div class="r" style="left:806.5px;top:216.4px;width:194px;height:251px;overflow:hidden">
<div class="r" style="left:-806.5px;top:-216.4px;width:1024px;height:479px">
<div class="r" style="left:873.70px;top:208.00px;width:125.90px;height:15.20px;background:linear-gradient(#fbfbfb,#ededed);border-radius:1.5px;box-shadow:inset 0 0 0 0.8px #c4c4c4"></div>
<div class="t" style="left:876.70px;top:214.21px;font-size:6.6px;color:#999;font-weight:normal;letter-spacing:0px;">None</div>
<svg class="r" style="left:989.6px;top:213.6px" width="6" height="4"><path d="M0.5 0.8h4.4l-2.2 2.6z" fill="#aaa"/></svg>
<div class="t" style="left:811.00px;top:214.21px;font-size:6.6px;color:#111;font-weight:normal;letter-spacing:0px;">Normal Texture</div>
<div class="t" style="left:811.00px;top:229.61px;font-size:6.6px;color:#111;font-weight:normal;letter-spacing:0px;">Coat Normal Texture</div>
<div class="r" style="left:873.70px;top:226.70px;width:125.90px;height:11.60px;background:linear-gradient(#fbfbfb,#ededed);border-radius:1.5px;box-shadow:inset 0 0 0 0.8px #c4c4c4"></div>
<div class="t" style="left:876.70px;top:230.51px;font-size:6.6px;color:#666;font-weight:normal;letter-spacing:0px;">None</div>
<svg class="r" style="left:989.6px;top:230.5px" width="6" height="4"><path d="M0.5 0.8h4.4l-2.2 2.6z" fill="#aaa"/></svg>
<div class="r" style="left:811.20px;top:243.20px;width:8.80px;height:8.80px;background:#fff;box-shadow:inset 0 0 0 0.8px #a8a8a8"></div>
<div class="t" style="left:822.00px;top:244.71px;font-size:6.6px;color:#111;font-weight:normal;letter-spacing:0px;">Flip Textures</div>
<div class="t" style="left:811.20px;top:258.96px;font-size:6.9px;color:#111;font-weight:bold;letter-spacing:0px;">Edge Styling</div>
<div class="r" style="left:811.20px;top:265.60px;width:189.00px;height:1.00px;background:#c4c4c4"></div>
<div class="r" style="left:811.20px;top:269.50px;width:181.40px;height:12.70px;background:linear-gradient(#fbfbfb,#ededed);border-radius:1.5px;box-shadow:inset 0 0 0 0.8px #c4c4c4"></div>
<div class="r" style="left:993.00px;top:269.50px;width:7.00px;height:12.70px;background:linear-gradient(#fbfbfb,#ededed);box-shadow:inset 0 0 0 0.8px #c4c4c4"></div>
<svg class="r" style="left:994px;top:274px" width="5" height="4"><path d="M0.3 0.8h4.2l-2.1 2.6z" fill="#444"/></svg>
<svg class="r" style="left:813px;top:271.3px" width="9" height="9"><circle cx="4.5" cy="4.5" r="4.1" fill="#0a0a70"/></svg>
<div class="t" style="left:823.00px;top:272.71px;font-size:6.6px;color:#111;font-weight:normal;letter-spacing:0px;">Edge Color</div>
<div class="t" style="left:811.20px;top:289.06px;font-size:6.9px;color:#111;font-weight:bold;letter-spacing:0px;">Backface Styling</div>
<div class="r" style="left:811.20px;top:295.70px;width:189.00px;height:1.00px;background:#c4c4c4"></div>
<div class="t" style="left:811.00px;top:300.41px;font-size:6.6px;color:#111;font-weight:normal;letter-spacing:0px;">Backface</div>
<div class="t" style="left:811.00px;top:308.31px;font-size:6.6px;color:#111;font-weight:normal;letter-spacing:0px;">Representation</div>
<div class="r" style="left:873.70px;top:301.70px;width:125.90px;height:11.60px;background:linear-gradient(#fbfbfb,#ededed);border-radius:1.5px;box-shadow:inset 0 0 0 0.8px #c4c4c4"></div>
<div class="t" style="left:876.70px;top:304.31px;font-size:6.6px;color:#111;font-weight:normal;letter-spacing:0px;">Follow Frontface</div>
<svg class="r" style="left:989.6px;top:305.5px" width="6" height="4"><path d="M0.5 0.8h4.4l-2.2 2.6z" fill="#444"/></svg>
<div class="r" style="left:811.20px;top:317.70px;width:188.40px;height:12.80px;background:linear-gradient(#fbfbfb,#ededed);border-radius:1.5px;box-shadow:inset 0 0 0 0.8px #c4c4c4"></div>
<svg class="r" style="left:813px;top:319.6px" width="9" height="9"><circle cx="4.5" cy="4.5" r="3.9" fill="#fff" stroke="#333" stroke-width="0.8"/></svg>
<div class="t" style="left:823.00px;top:320.91px;font-size:6.6px;color:#111;font-weight:normal;letter-spacing:0px;">Backface Ambient Color</div>
<div class="r" style="left:811.20px;top:333.60px;width:188.40px;height:12.70px;background:linear-gradient(#fbfbfb,#ededed);border-radius:1.5px;box-shadow:inset 0 0 0 0.8px #c4c4c4"></div>
<svg class="r" style="left:813px;top:335.45000000000005px" width="9" height="9"><circle cx="4.5" cy="4.5" r="3.9" fill="#fff" stroke="#333" stroke-width="0.8"/></svg>
<div class="t" style="left:823.00px;top:336.76px;font-size:6.6px;color:#111;font-weight:normal;letter-spacing:0px;">Backface Diffuse Color</div>
<div class="t" style="left:811.00px;top:352.21px;font-size:6.6px;color:#111;font-weight:normal;letter-spacing:0px;">Backface Opacity</div>
<div class="r" style="left:874.40px;top:354.20px;width:54.00px;height:2.20px;background:#2a7bd0;border-radius:1px"></div>
<div class="r" style="left:926.50px;top:351.20px;width:6.50px;height:8.00px;background:linear-gradient(#fafafa,#e4e4e4);border-radius:2px;box-shadow:inset 0 0 0 0.7px #aaa"></div>
<div class="r" style="left:936.80px;top:349.50px;width:62.80px;height:12.70px;background:#fff;border-radius:1.5px;box-shadow:inset 0 0 0 0.8px #c0c0c0"></div>
<div class="t" style="left:939.00px;top:352.51px;font-size:6.6px;color:#111;font-weight:normal;letter-spacing:0px;">1</div>
<div class="t" style="left:811.20px;top:368.06px;font-size:6.9px;color:#111;font-weight:bold;letter-spacing:0px;">Transforming</div>
<div class="r" style="left:811.20px;top:374.70px;width:189.00px;height:1.00px;background:#c4c4c4"></div>
<div class="t" style="left:811.00px;top:382.46px;font-size:6.6px;color:#111;font-weight:normal;letter-spacing:0px;">Translation</div>
<div class="r" style="left:873.70px;top:379.50px;width:40.50px;height:12.30px;background:#fff;border-radius:1.5px;box-shadow:inset 0 0 0 0.8px #c0c0c0"></div>
<div class="t" style="left:875.50px;top:382.46px;font-size:6.6px;color:#111;font-weight:normal;letter-spacing:0px;">0</div>
<div class="r" style="left:917.50px;top:379.50px;width:38.30px;height:12.30px;background:#fff;border-radius:1.5px;box-shadow:inset 0 0 0 0.8px #c0c0c0"></div>
<div class="t" style="left:919.30px;top:382.46px;font-size:6.6px;color:#111;font-weight:normal;letter-spacing:0px;">0</div>
<div class="r" style="left:959.00px;top:379.50px;width:40.60px;height:12.30px;background:#fff;border-radius:1.5px;box-shadow:inset 0 0 0 0.8px #7ab0e0"></div>
<div class="t" style="left:960.80px;top:382.46px;font-size:6.6px;color:#111;font-weight:normal;letter-spacing:0px;">0.323524651</div>
<div class="t" style="left:811.00px;top:397.81px;font-size:6.6px;color:#111;font-weight:normal;letter-spacing:0px;">Scale</div>
<div class="r" style="left:873.70px;top:395.00px;width:40.50px;height:12.00px;background:#fff;border-radius:1.5px;box-shadow:inset 0 0 0 0.8px #c0c0c0"></div>
<div class="t" style="left:875.50px;top:397.81px;font-size:6.6px;color:#111;font-weight:normal;letter-spacing:0px;">1</div>
<div class="r" style="left:917.50px;top:395.00px;width:38.30px;height:12.00px;background:#fff;border-radius:1.5px;box-shadow:inset 0 0 0 0.8px #c0c0c0"></div>
<div class="t" style="left:919.30px;top:397.81px;font-size:6.6px;color:#111;font-weight:normal;letter-spacing:0px;">1</div>
<div class="r" style="left:959.00px;top:395.00px;width:40.60px;height:12.00px;background:#fff;border-radius:1.5px;box-shadow:inset 0 0 0 0.8px #c0c0c0"></div>
<div class="t" style="left:960.80px;top:397.81px;font-size:6.6px;color:#111;font-weight:normal;letter-spacing:0px;">1</div>
<div class="t" style="left:811.00px;top:413.16px;font-size:6.6px;color:#111;font-weight:normal;letter-spacing:0px;">Orientation</div>
<div class="r" style="left:873.70px;top:410.30px;width:40.50px;height:12.10px;background:#fff;border-radius:1.5px;box-shadow:inset 0 0 0 0.8px #c0c0c0"></div>
<div class="t" style="left:875.50px;top:413.16px;font-size:6.6px;color:#111;font-weight:normal;letter-spacing:0px;">0</div>
<div class="r" style="left:917.50px;top:410.30px;width:38.30px;height:12.10px;background:#fff;border-radius:1.5px;box-shadow:inset 0 0 0 0.8px #c0c0c0"></div>
<div class="t" style="left:919.30px;top:413.16px;font-size:6.6px;color:#111;font-weight:normal;letter-spacing:0px;">0</div>
<div class="r" style="left:959.00px;top:410.30px;width:40.60px;height:12.10px;background:#fff;border-radius:1.5px;box-shadow:inset 0 0 0 0.8px #c0c0c0"></div>
<div class="t" style="left:960.80px;top:413.16px;font-size:6.6px;color:#111;font-weight:normal;letter-spacing:0px;">0</div>
<div class="t" style="left:811.00px;top:428.41px;font-size:6.6px;color:#111;font-weight:normal;letter-spacing:0px;">Origin</div>
<div class="r" style="left:873.70px;top:425.60px;width:40.50px;height:12.00px;background:#fff;border-radius:1.5px;box-shadow:inset 0 0 0 0.8px #c0c0c0"></div>
<div class="t" style="left:875.50px;top:428.41px;font-size:6.6px;color:#111;font-weight:normal;letter-spacing:0px;">0</div>
<div class="r" style="left:917.50px;top:425.60px;width:38.30px;height:12.00px;background:#fff;border-radius:1.5px;box-shadow:inset 0 0 0 0.8px #c0c0c0"></div>
<div class="t" style="left:919.30px;top:428.41px;font-size:6.6px;color:#111;font-weight:normal;letter-spacing:0px;">0</div>
<div class="r" style="left:959.00px;top:425.60px;width:40.60px;height:12.00px;background:#fff;border-radius:1.5px;box-shadow:inset 0 0 0 0.8px #c0c0c0"></div>
<div class="t" style="left:960.80px;top:428.41px;font-size:6.6px;color:#111;font-weight:normal;letter-spacing:0px;">0</div>
<div class="t" style="left:811.00px;top:441.11px;font-size:6.6px;color:#111;font-weight:normal;letter-spacing:0px;">Coordinate Shift</div>
<div class="t" style="left:811.00px;top:449.21px;font-size:6.6px;color:#111;font-weight:normal;letter-spacing:0px;">Scale Method</div>
<div class="r" style="left:873.70px;top:442.00px;width:125.90px;height:12.50px;background:linear-gradient(#fbfbfb,#ededed);border-radius:1.5px;box-shadow:inset 0 0 0 0.8px #c4c4c4"></div>
<div class="t" style="left:876.70px;top:445.06px;font-size:6.6px;color:#111;font-weight:normal;letter-spacing:0px;">Always Auto Shift Scale</div>
<svg class="r" style="left:989.6px;top:446.25px" width="6" height="4"><path d="M0.5 0.8h4.4l-2.2 2.6z" fill="#444"/></svg>
</div></div>
<div class="r" style="left:1000.80px;top:213.50px;width:7.50px;height:244.50px;background:#dcdcdc"></div>
<div class="r" style="left:1000.80px;top:322.80px;width:7.50px;height:40.00px;background:#f6f6f6;box-shadow:inset 0 0 0 0.6px #d4d4d4"></div>
<div class="r" style="left:1000.80px;top:217.00px;width:7.50px;height:8.00px;background:#fafafa"></div>
<svg class="r" style="left:1000.8px;top:218px" width="8" height="6"><path d="M1.7 4.3h4.2l-2.1-2.4z" fill="#222"/></svg>
<div class="r" style="left:1000.80px;top:450.00px;width:7.50px;height:8.00px;background:#fafafa"></div>
<svg class="r" style="left:1000.8px;top:451px" width="8" height="6"><path d="M1.7 1.8h4.2l-2.1 2.4z" fill="#222"/></svg>
<div class="r" style="left:956.50px;top:376.50px;width:47.50px;height:17.00px;box-shadow:inset 0 0 0 1.8px #f2c23c"></div>
<div class="r" id="rp" style="left:0;top:0;width:1024px;height:479px"></div>
<svg class="r" style="left:0;top:0" width="1024" height="479"><defs><linearGradient id="cmap" gradientUnits="userSpaceOnUse" x1="0" y1="231" x2="0" y2="399"><stop offset="0.000" stop-color="#b80f52"/><stop offset="0.089" stop-color="#c42a50"/><stop offset="0.161" stop-color="#c8404c"/><stop offset="0.232" stop-color="#c86248"/><stop offset="0.310" stop-color="#c28248"/><stop offset="0.393" stop-color="#c0a242"/><stop offset="0.482" stop-color="#c8c032"/><stop offset="0.542" stop-color="#a8c43a"/><stop offset="0.601" stop-color="#50b848"/><stop offset="0.655" stop-color="#22b055"/><stop offset="0.708" stop-color="#1aa870"/><stop offset="0.756" stop-color="#18a088"/><stop offset="0.804" stop-color="#1a90a8"/><stop offset="0.863" stop-color="#1a80c0"/><stop offset="0.935" stop-color="#1870c6"/><stop offset="0.976" stop-color="#1462bc"/><stop offset="0.994" stop-color="#0c3f98"/></linearGradient><linearGradient id="shade" x1="0" y1="0" x2="1" y2="0"><stop offset="0" stop-color="#000" stop-opacity="0.36"/><stop offset="0.18" stop-color="#000" stop-opacity="0.1"/><stop offset="0.5" stop-color="#fff" stop-opacity="0.07"/><stop offset="0.82" stop-color="#000" stop-opacity="0.1"/><stop offset="1" stop-color="#000" stop-opacity="0.38"/></linearGradient><linearGradient id="blue1" x1="0" y1="0" x2="0" y2="1"><stop offset="0" stop-color="#186cc4"/><stop offset="0.55" stop-color="#1152aa"/><stop offset="1" stop-color="#0a3286"/></linearGradient><linearGradient id="fadeg" gradientUnits="userSpaceOnUse" x1="0" y1="320" x2="0" y2="385"><stop offset="0" stop-color="#fff"/><stop offset="1" stop-color="#000"/></linearGradient><mask id="fade" maskUnits="userSpaceOnUse" x="0" y="0" width="1024" height="479"><rect x="0" y="0" width="1024" height="479" fill="url(#fadeg)"/></mask></defs><path d="M296.60 240.00 L698.40 240.00 L661.10 270.10 L661.90 258.40 L652.40 255.50 L629.70 252.50 L609.00 248.90 L584.40 246.00 L497.50 244.20 L410.60 246.00 L386.00 248.90 L365.30 252.50 L342.60 255.50 L333.10 258.40 L333.90 270.10Z" fill="#cfd3d6"/><path d="M333.10 258.40 L342.60 255.50 L365.30 252.50 L386.00 248.90 L410.60 246.00 L497.50 244.20 L584.40 246.00 L609.00 248.90 L629.70 252.50 L652.40 255.50 L661.90 258.40 L661.10 270.10 L657.50 278.90 L651.60 305.00 L642.70 340.00 L635.30 361.40 L359.70 361.40 L352.30 340.00 L343.40 305.00 L337.50 278.90 L333.90 270.10Z" fill="#e0eef0"/><path d="M661.90 258.40 L661.10 270.10 L657.50 278.90 L651.60 305.00 L642.70 340.00 L635.30 361.40 L626.00 361.40 L632.00 340.00 L640.00 305.00 L648.00 280.00 L652.40 255.50Z" fill="#cfe1e3" opacity="0.8"/><path d="M333.10 258.40 L333.90 270.10 L337.50 278.90 L343.40 305.00 L352.30 340.00 L359.70 361.40 L369.00 361.40 L363.00 340.00 L355.00 305.00 L347.00 280.00 L342.60 255.50Z" fill="#cfe1e3" opacity="0.8"/><path d="M333.90 259.10 L353.60 270.80 L406.20 277.40 L497.50 279.20 L588.80 277.40 L641.40 270.80 L661.10 259.10 L661.10 270.10 L648.70 278.90 L588.80 281.80 L497.50 283.20 L406.20 281.80 L346.30 278.90 L333.90 270.10Z" fill="#adc7ca"/><path d="M652.4 255.5 Q640.7 308.45 626.0 361.4" stroke="#9fbcc0" stroke-width="0.9" fill="none"/><path d="M342.6 255.5 Q354.3 308.45 369.0 361.4" stroke="#9fbcc0" stroke-width="0.9" fill="none"/><path d="M640.5 254 Q632.2 307.7 621.0 361.4" stroke="#b0c8cb" stroke-width="0.9" fill="none" stroke-dasharray="1 1"/><path d="M354.5 254 Q362.8 307.7 374.0 361.4" stroke="#b0c8cb" stroke-width="0.9" fill="none" stroke-dasharray="1 1"/><path d="M630.0 252.5 Q623.8 306.95 614.5 361.4" stroke="#a8c2c5" stroke-width="0.9" fill="none" stroke-dasharray="1 1"/><path d="M365.0 252.5 Q371.2 306.95 380.5 361.4" stroke="#a8c2c5" stroke-width="0.9" fill="none" stroke-dasharray="1 1"/><path d="M622.0 251 Q616.5 306.2 608.0 361.4" stroke="#b8ced0" stroke-width="0.9" fill="none"/><path d="M373.0 251 Q378.5 306.2 387.0 361.4" stroke="#b8ced0" stroke-width="0.9" fill="none"/><path d="M612.0 249.5 Q608.5 305.45 602.0 361.4" stroke="#b4cbce" stroke-width="0.9" fill="none" stroke-dasharray="1 1"/><path d="M383.0 249.5 Q386.5 305.45 393.0 361.4" stroke="#b4cbce" stroke-width="0.9" fill="none" stroke-dasharray="1 1"/><path d="M602.0 248 Q600.0 304.7 595.0 361.4" stroke="#bcd2d4" stroke-width="0.9" fill="none"/><path d="M393.0 248 Q395.0 304.7 400.0 361.4" stroke="#bcd2d4" stroke-width="0.9" fill="none"/><path d="M592.0 247 Q591.5 304.2 588.0 361.4" stroke="#c2d6d8" stroke-width="0.9" fill="none"/><path d="M403.0 247 Q403.5 304.2 407.0 361.4" stroke="#c2d6d8" stroke-width="0.9" fill="none"/><path d="M361.4 361.4 L633.6 361.4" stroke="#b8cccf" stroke-width="1"/><path d="M402 431 L590 431 L588 437 L404 437 Z" fill="#d6e6e8"/><path d="M397.40 417.00 L597.70 417.00 L606.00 421.00 L620.00 428.00 L695.40 431.00 L695.40 432.00 L297.50 432.00 L297.50 431.00 L330.00 425.60 L345.70 423.30 L389.60 423.00 L394.30 421.70Z" fill="url(#blue1)"/><path d="M297.5 431.6 L695.4 431.6" stroke="#0a2f85" stroke-width="1.4"/><path d="M391.00 399.00 L603.00 399.00 L608.00 404.00 L625.00 412.00 L693.00 416.00 L693.00 417.00 L301.00 417.00 L301.00 416.00 L330.00 413.10 L377.00 411.50 L383.30 410.00 L388.80 403.70Z" fill="url(#blue1)"/><path d="M301 416.8 L693 416.8" stroke="#0a2f85" stroke-width="1.4"/><path d="M398.60 330.00 L392.00 380.00 L385.60 385.70 L380.00 392.00 L370.80 397.00 L351.20 398.20 L351.20 399.50 L642.80 399.50 L642.80 398.20 L625.00 397.00 L615.00 393.00 L606.00 385.00 L602.70 370.00 L597.00 330.00Z" fill="url(#cmap)"/><path d="M388.25 397.00 L388.98 390.65 L389.70 384.43 L390.42 378.35 L391.15 372.40 L391.87 366.59 L392.60 360.91 L393.32 355.36 L394.04 349.94 L394.77 344.66 L395.49 339.52 L396.22 334.50 L396.94 329.62 L397.66 324.88 L398.39 320.27 L399.11 315.79 L399.84 311.44 L400.56 307.23 L401.28 303.16 L402.01 299.21 L402.73 295.40 L403.45 291.73 L404.18 288.18 L404.90 284.78 L405.63 281.50 L406.35 278.36 L407.07 275.35 L407.80 272.48 L408.52 269.74 L409.25 267.13 L409.97 264.66 L410.69 262.32 L411.42 260.11 L412.14 258.04 L412.87 256.10 L413.59 254.30 L414.31 252.62 L415.04 251.09 L415.76 249.68 L416.48 248.41 L417.21 247.28 L417.93 246.28 L418.66 245.41 L419.38 244.67 L420.10 244.07 L420.83 243.60 L421.55 243.27 L422.28 243.07 L423.00 243.00 L423.00 243.00 L423.72 243.07 L424.45 243.27 L425.17 243.60 L425.90 244.07 L426.62 244.67 L427.34 245.41 L428.07 246.28 L428.79 247.28 L429.52 248.41 L430.24 249.68 L430.96 251.09 L431.69 252.62 L432.41 254.30 L433.13 256.10 L433.86 258.04 L434.58 260.11 L435.31 262.32 L436.03 264.66 L436.75 267.13 L437.48 269.74 L438.20 272.48 L438.93 275.35 L439.65 278.36 L440.37 281.50 L441.10 284.78 L441.82 288.18 L442.55 291.73 L443.27 295.40 L443.99 299.21 L444.72 303.16 L445.44 307.23 L446.16 311.44 L446.89 315.79 L447.61 320.27 L448.34 324.88 L449.06 329.62 L449.78 334.50 L450.51 339.52 L451.23 344.66 L451.96 349.94 L452.68 355.36 L453.40 360.91 L454.13 366.59 L454.85 372.40 L455.58 378.35 L456.30 384.43 L457.02 390.65 L457.75 397.00Z" fill="url(#cmap)"/><path d="M388.25 397.00 L388.98 390.65 L389.70 384.43 L390.42 378.35 L391.15 372.40 L391.87 366.59 L392.60 360.91 L393.32 355.36 L394.04 349.94 L394.77 344.66 L395.49 339.52 L396.22 334.50 L396.94 329.62 L397.66 324.88 L398.39 320.27 L399.11 315.79 L399.84 311.44 L400.56 307.23 L401.28 303.16 L402.01 299.21 L402.73 295.40 L403.45 291.73 L404.18 288.18 L404.90 284.78 L405.63 281.50 L406.35 278.36 L407.07 275.35 L407.80 272.48 L408.52 269.74 L409.25 267.13 L409.97 264.66 L410.69 262.32 L411.42 260.11 L412.14 258.04 L412.87 256.10 L413.59 254.30 L414.31 252.62 L415.04 251.09 L415.76 249.68 L416.48 248.41 L417.21 247.28 L417.93 246.28 L418.66 245.41 L419.38 244.67 L420.10 244.07 L420.83 243.60 L421.55 243.27 L422.28 243.07 L423.00 243.00 L423.00 243.00 L423.72 243.07 L424.45 243.27 L425.17 243.60 L425.90 244.07 L426.62 244.67 L427.34 245.41 L428.07 246.28 L428.79 247.28 L429.52 248.41 L430.24 249.68 L430.96 251.09 L431.69 252.62 L432.41 254.30 L433.13 256.10 L433.86 258.04 L434.58 260.11 L435.31 262.32 L436.03 264.66 L436.75 267.13 L437.48 269.74 L438.20 272.48 L438.93 275.35 L439.65 278.36 L440.37 281.50 L441.10 284.78 L441.82 288.18 L442.55 291.73 L443.27 295.40 L443.99 299.21 L444.72 303.16 L445.44 307.23 L446.16 311.44 L446.89 315.79 L447.61 320.27 L448.34 324.88 L449.06 329.62 L449.78 334.50 L450.51 339.52 L451.23 344.66 L451.96 349.94 L452.68 355.36 L453.40 360.91 L454.13 366.59 L454.85 372.40 L455.58 378.35 L456.30 384.43 L457.02 390.65 L457.75 397.00Z" fill="url(#shade)" mask="url(#fade)"/><path d="M536.95 397.00 L537.68 390.65 L538.40 384.43 L539.12 378.35 L539.85 372.40 L540.57 366.59 L541.30 360.91 L542.02 355.36 L542.74 349.94 L543.47 344.66 L544.19 339.52 L544.92 334.50 L545.64 329.62 L546.36 324.88 L547.09 320.27 L547.81 315.79 L548.54 311.44 L549.26 307.23 L549.98 303.16 L550.71 299.21 L551.43 295.40 L552.15 291.73 L552.88 288.18 L553.60 284.78 L554.33 281.50 L555.05 278.36 L555.77 275.35 L556.50 272.48 L557.22 269.74 L557.95 267.13 L558.67 264.66 L559.39 262.32 L560.12 260.11 L560.84 258.04 L561.57 256.10 L562.29 254.30 L563.01 252.62 L563.74 251.09 L564.46 249.68 L565.18 248.41 L565.91 247.28 L566.63 246.28 L567.36 245.41 L568.08 244.67 L568.80 244.07 L569.53 243.60 L570.25 243.27 L570.98 243.07 L571.70 243.00 L571.70 243.00 L572.42 243.07 L573.15 243.27 L573.87 243.60 L574.60 244.07 L575.32 244.67 L576.04 245.41 L576.77 246.28 L577.49 247.28 L578.22 248.41 L578.94 249.68 L579.66 251.09 L580.39 252.62 L581.11 254.30 L581.83 256.10 L582.56 258.04 L583.28 260.11 L584.01 262.32 L584.73 264.66 L585.45 267.13 L586.18 269.74 L586.90 272.48 L587.63 275.35 L588.35 278.36 L589.07 281.50 L589.80 284.78 L590.52 288.18 L591.25 291.73 L591.97 295.40 L592.69 299.21 L593.42 303.16 L594.14 307.23 L594.86 311.44 L595.59 315.79 L596.31 320.27 L597.04 324.88 L597.76 329.62 L598.48 334.50 L599.21 339.52 L599.93 344.66 L600.66 349.94 L601.38 355.36 L602.10 360.91 L602.83 366.59 L603.55 372.40 L604.28 378.35 L605.00 384.43 L605.72 390.65 L606.45 397.00Z" fill="url(#cmap)"/><path d="M536.95 397.00 L537.68 390.65 L538.40 384.43 L539.12 378.35 L539.85 372.40 L540.57 366.59 L541.30 360.91 L542.02 355.36 L542.74 349.94 L543.47 344.66 L544.19 339.52 L544.92 334.50 L545.64 329.62 L546.36 324.88 L547.09 320.27 L547.81 315.79 L548.54 311.44 L549.26 307.23 L549.98 303.16 L550.71 299.21 L551.43 295.40 L552.15 291.73 L552.88 288.18 L553.60 284.78 L554.33 281.50 L555.05 278.36 L555.77 275.35 L556.50 272.48 L557.22 269.74 L557.95 267.13 L558.67 264.66 L559.39 262.32 L560.12 260.11 L560.84 258.04 L561.57 256.10 L562.29 254.30 L563.01 252.62 L563.74 251.09 L564.46 249.68 L565.18 248.41 L565.91 247.28 L566.63 246.28 L567.36 245.41 L568.08 244.67 L568.80 244.07 L569.53 243.60 L570.25 243.27 L570.98 243.07 L571.70 243.00 L571.70 243.00 L572.42 243.07 L573.15 243.27 L573.87 243.60 L574.60 244.07 L575.32 244.67 L576.04 245.41 L576.77 246.28 L577.49 247.28 L578.22 248.41 L578.94 249.68 L579.66 251.09 L580.39 252.62 L581.11 254.30 L581.83 256.10 L582.56 258.04 L583.28 260.11 L584.01 262.32 L584.73 264.66 L585.45 267.13 L586.18 269.74 L586.90 272.48 L587.63 275.35 L588.35 278.36 L589.07 281.50 L589.80 284.78 L590.52 288.18 L591.25 291.73 L591.97 295.40 L592.69 299.21 L593.42 303.16 L594.14 307.23 L594.86 311.44 L595.59 315.79 L596.31 320.27 L597.04 324.88 L597.76 329.62 L598.48 334.50 L599.21 339.52 L599.93 344.66 L600.66 349.94 L601.38 355.36 L602.10 360.91 L602.83 366.59 L603.55 372.40 L604.28 378.35 L605.00 384.43 L605.72 390.65 L606.45 397.00Z" fill="url(#shade)" mask="url(#fade)"/><path d="M442.14 397.00 L443.47 391.14 L444.77 385.41 L446.04 379.80 L447.29 374.32 L448.51 368.96 L449.70 363.72 L450.87 358.60 L452.02 353.61 L453.14 348.74 L454.25 344.00 L455.33 339.37 L456.40 334.88 L457.45 330.50 L458.48 326.25 L459.49 322.12 L460.49 318.11 L461.48 314.23 L462.45 310.47 L463.42 306.83 L464.37 303.32 L465.30 299.93 L466.23 296.66 L467.15 293.52 L468.06 290.50 L468.97 287.60 L469.86 284.83 L470.75 282.18 L471.64 279.65 L472.51 277.25 L473.39 274.97 L474.26 272.81 L475.12 270.78 L475.98 268.87 L476.84 267.08 L477.69 265.42 L478.55 263.88 L479.40 262.46 L480.25 261.16 L481.10 259.99 L481.94 258.94 L482.79 258.02 L483.63 257.22 L484.48 256.54 L485.32 255.99 L486.17 255.55 L487.01 255.25 L487.86 255.06 L488.70 255.00 L488.70 255.00 L489.54 255.06 L490.39 255.25 L491.23 255.55 L492.08 255.99 L492.92 256.54 L493.77 257.22 L494.61 258.02 L495.46 258.94 L496.30 259.99 L497.15 261.16 L498.00 262.46 L498.85 263.88 L499.71 265.42 L500.56 267.08 L501.42 268.87 L502.28 270.78 L503.14 272.81 L504.01 274.97 L504.89 277.25 L505.76 279.65 L506.65 282.18 L507.54 284.83 L508.43 287.60 L509.34 290.50 L510.25 293.52 L511.17 296.66 L512.10 299.93 L513.03 303.32 L513.98 306.83 L514.95 310.47 L515.92 314.23 L516.91 318.11 L517.91 322.12 L518.92 326.25 L519.95 330.50 L521.00 334.88 L522.07 339.37 L523.15 344.00 L524.26 348.74 L525.38 353.61 L526.53 358.60 L527.70 363.72 L528.89 368.96 L530.11 374.32 L531.36 379.80 L532.63 385.41 L533.93 391.14 L535.26 397.00Z" fill="url(#cmap)"/><path d="M442.14 397.00 L443.47 391.14 L444.77 385.41 L446.04 379.80 L447.29 374.32 L448.51 368.96 L449.70 363.72 L450.87 358.60 L452.02 353.61 L453.14 348.74 L454.25 344.00 L455.33 339.37 L456.40 334.88 L457.45 330.50 L458.48 326.25 L459.49 322.12 L460.49 318.11 L461.48 314.23 L462.45 310.47 L463.42 306.83 L464.37 303.32 L465.30 299.93 L466.23 296.66 L467.15 293.52 L468.06 290.50 L468.97 287.60 L469.86 284.83 L470.75 282.18 L471.64 279.65 L472.51 277.25 L473.39 274.97 L474.26 272.81 L475.12 270.78 L475.98 268.87 L476.84 267.08 L477.69 265.42 L478.55 263.88 L479.40 262.46 L480.25 261.16 L481.10 259.99 L481.94 258.94 L482.79 258.02 L483.63 257.22 L484.48 256.54 L485.32 255.99 L486.17 255.55 L487.01 255.25 L487.86 255.06 L488.70 255.00 L488.70 255.00 L489.54 255.06 L490.39 255.25 L491.23 255.55 L492.08 255.99 L492.92 256.54 L493.77 257.22 L494.61 258.02 L495.46 258.94 L496.30 259.99 L497.15 261.16 L498.00 262.46 L498.85 263.88 L499.71 265.42 L500.56 267.08 L501.42 268.87 L502.28 270.78 L503.14 272.81 L504.01 274.97 L504.89 277.25 L505.76 279.65 L506.65 282.18 L507.54 284.83 L508.43 287.60 L509.34 290.50 L510.25 293.52 L511.17 296.66 L512.10 299.93 L513.03 303.32 L513.98 306.83 L514.95 310.47 L515.92 314.23 L516.91 318.11 L517.91 322.12 L518.92 326.25 L519.95 330.50 L521.00 334.88 L522.07 339.37 L523.15 344.00 L524.26 348.74 L525.38 353.61 L526.53 358.60 L527.70 363.72 L528.89 368.96 L530.11 374.32 L531.36 379.80 L532.63 385.41 L533.93 391.14 L535.26 397.00Z" fill="url(#shade)" mask="url(#fade)"/><path d="M451.44 397.00 L452.93 390.94 L454.38 385.01 L455.80 379.20 L457.19 373.52 L458.55 367.97 L459.89 362.55 L461.20 357.25 L462.48 352.08 L463.74 347.04 L464.98 342.13 L466.20 337.35 L467.39 332.69 L468.57 328.16 L469.73 323.76 L470.88 319.48 L472.00 315.33 L473.12 311.31 L474.22 307.42 L475.30 303.66 L476.37 300.02 L477.44 296.51 L478.49 293.13 L479.53 289.88 L480.56 286.75 L481.58 283.75 L482.60 280.88 L483.61 278.14 L484.61 275.52 L485.60 273.03 L486.59 270.67 L487.58 268.44 L488.56 266.33 L489.54 264.36 L490.52 262.51 L491.49 260.78 L492.46 259.19 L493.42 257.72 L494.39 256.38 L495.35 255.17 L496.32 254.08 L497.28 253.13 L498.24 252.30 L499.20 251.60 L500.16 251.02 L501.12 250.57 L502.08 250.26 L503.04 250.06 L504.00 250.00 L504.00 250.00 L504.96 250.06 L505.92 250.26 L506.88 250.57 L507.84 251.02 L508.80 251.60 L509.76 252.30 L510.72 253.13 L511.68 254.08 L512.65 255.17 L513.61 256.38 L514.58 257.72 L515.54 259.19 L516.51 260.78 L517.48 262.51 L518.46 264.36 L519.44 266.33 L520.42 268.44 L521.41 270.67 L522.40 273.03 L523.39 275.52 L524.39 278.14 L525.40 280.88 L526.42 283.75 L527.44 286.75 L528.47 289.88 L529.51 293.13 L530.56 296.51 L531.63 300.02 L532.70 303.66 L533.78 307.42 L534.88 311.31 L536.00 315.33 L537.12 319.48 L538.27 323.76 L539.43 328.16 L540.61 332.69 L541.80 337.35 L543.02 342.13 L544.26 347.04 L545.52 352.08 L546.80 357.25 L548.11 362.55 L549.45 367.97 L550.81 373.52 L552.20 379.20 L553.62 385.01 L555.07 390.94 L556.56 397.00Z" fill="url(#cmap)"/><path d="M451.44 397.00 L452.93 390.94 L454.38 385.01 L455.80 379.20 L457.19 373.52 L458.55 367.97 L459.89 362.55 L461.20 357.25 L462.48 352.08 L463.74 347.04 L464.98 342.13 L466.20 337.35 L467.39 332.69 L468.57 328.16 L469.73 323.76 L470.88 319.48 L472.00 315.33 L473.12 311.31 L474.22 307.42 L475.30 303.66 L476.37 300.02 L477.44 296.51 L478.49 293.13 L479.53 289.88 L480.56 286.75 L481.58 283.75 L482.60 280.88 L483.61 278.14 L484.61 275.52 L485.60 273.03 L486.59 270.67 L487.58 268.44 L488.56 266.33 L489.54 264.36 L490.52 262.51 L491.49 260.78 L492.46 259.19 L493.42 257.72 L494.39 256.38 L495.35 255.17 L496.32 254.08 L497.28 253.13 L498.24 252.30 L499.20 251.60 L500.16 251.02 L501.12 250.57 L502.08 250.26 L503.04 250.06 L504.00 250.00 L504.00 250.00 L504.96 250.06 L505.92 250.26 L506.88 250.57 L507.84 251.02 L508.80 251.60 L509.76 252.30 L510.72 253.13 L511.68 254.08 L512.65 255.17 L513.61 256.38 L514.58 257.72 L515.54 259.19 L516.51 260.78 L517.48 262.51 L518.46 264.36 L519.44 266.33 L520.42 268.44 L521.41 270.67 L522.40 273.03 L523.39 275.52 L524.39 278.14 L525.40 280.88 L526.42 283.75 L527.44 286.75 L528.47 289.88 L529.51 293.13 L530.56 296.51 L531.63 300.02 L532.70 303.66 L533.78 307.42 L534.88 311.31 L536.00 315.33 L537.12 319.48 L538.27 323.76 L539.43 328.16 L540.61 332.69 L541.80 337.35 L543.02 342.13 L544.26 347.04 L545.52 352.08 L546.80 357.25 L548.11 362.55 L549.45 367.97 L550.81 373.52 L552.20 379.20 L553.62 385.01 L555.07 390.94 L556.56 397.00Z" fill="url(#shade)" mask="url(#fade)"/><path d="M393.72 397.00 L395.38 390.27 L396.99 383.68 L398.54 377.24 L400.05 370.93 L401.51 364.77 L402.92 358.75 L404.29 352.87 L405.62 347.13 L406.92 341.54 L408.17 336.08 L409.40 330.77 L410.59 325.60 L411.74 320.57 L412.87 315.68 L413.97 310.94 L415.05 306.33 L416.10 301.87 L417.12 297.55 L418.13 293.37 L419.11 289.33 L420.08 285.44 L421.02 281.68 L421.96 278.07 L422.87 274.60 L423.77 271.27 L424.66 268.08 L425.54 265.04 L426.41 262.13 L427.27 259.37 L428.12 256.75 L428.96 254.27 L429.79 251.93 L430.62 249.74 L431.44 247.68 L432.26 245.77 L433.08 244.00 L433.89 242.37 L434.70 240.88 L435.50 239.54 L436.30 238.33 L437.11 237.27 L437.91 236.35 L438.71 235.57 L439.51 234.93 L440.30 234.44 L441.10 234.08 L441.90 233.87 L442.70 233.80 L442.70 233.80 L443.50 233.87 L444.30 234.08 L445.10 234.44 L445.89 234.93 L446.69 235.57 L447.49 236.35 L448.29 237.27 L449.10 238.33 L449.90 239.54 L450.70 240.88 L451.51 242.37 L452.32 244.00 L453.14 245.77 L453.96 247.68 L454.78 249.74 L455.61 251.93 L456.44 254.27 L457.28 256.75 L458.13 259.37 L458.99 262.13 L459.86 265.04 L460.74 268.08 L461.63 271.27 L462.53 274.60 L463.44 278.07 L464.38 281.68 L465.32 285.44 L466.29 289.33 L467.27 293.37 L468.28 297.55 L469.30 301.87 L470.35 306.33 L471.43 310.94 L472.53 315.68 L473.66 320.57 L474.81 325.60 L476.00 330.77 L477.23 336.08 L478.48 341.54 L479.78 347.13 L481.11 352.87 L482.48 358.75 L483.89 364.77 L485.35 370.93 L486.86 377.24 L488.41 383.68 L490.02 390.27 L491.68 397.00Z" fill="url(#cmap)"/><path d="M393.72 397.00 L395.38 390.27 L396.99 383.68 L398.54 377.24 L400.05 370.93 L401.51 364.77 L402.92 358.75 L404.29 352.87 L405.62 347.13 L406.92 341.54 L408.17 336.08 L409.40 330.77 L410.59 325.60 L411.74 320.57 L412.87 315.68 L413.97 310.94 L415.05 306.33 L416.10 301.87 L417.12 297.55 L418.13 293.37 L419.11 289.33 L420.08 285.44 L421.02 281.68 L421.96 278.07 L422.87 274.60 L423.77 271.27 L424.66 268.08 L425.54 265.04 L426.41 262.13 L427.27 259.37 L428.12 256.75 L428.96 254.27 L429.79 251.93 L430.62 249.74 L431.44 247.68 L432.26 245.77 L433.08 244.00 L433.89 242.37 L434.70 240.88 L435.50 239.54 L436.30 238.33 L437.11 237.27 L437.91 236.35 L438.71 235.57 L439.51 234.93 L440.30 234.44 L441.10 234.08 L441.90 233.87 L442.70 233.80 L442.70 233.80 L443.50 233.87 L444.30 234.08 L445.10 234.44 L445.89 234.93 L446.69 235.57 L447.49 236.35 L448.29 237.27 L449.10 238.33 L449.90 239.54 L450.70 240.88 L451.51 242.37 L452.32 244.00 L453.14 245.77 L453.96 247.68 L454.78 249.74 L455.61 251.93 L456.44 254.27 L457.28 256.75 L458.13 259.37 L458.99 262.13 L459.86 265.04 L460.74 268.08 L461.63 271.27 L462.53 274.60 L463.44 278.07 L464.38 281.68 L465.32 285.44 L466.29 289.33 L467.27 293.37 L468.28 297.55 L469.30 301.87 L470.35 306.33 L471.43 310.94 L472.53 315.68 L473.66 320.57 L474.81 325.60 L476.00 330.77 L477.23 336.08 L478.48 341.54 L479.78 347.13 L481.11 352.87 L482.48 358.75 L483.89 364.77 L485.35 370.93 L486.86 377.24 L488.41 383.68 L490.02 390.27 L491.68 397.00Z" fill="url(#shade)" mask="url(#fade)"/><path d="M502.75 397.00 L504.42 390.24 L506.03 383.63 L507.59 377.15 L509.11 370.82 L510.57 364.63 L512.00 358.59 L513.37 352.68 L514.71 346.92 L516.01 341.30 L517.27 335.82 L518.50 330.49 L519.69 325.29 L520.86 320.24 L521.99 315.33 L523.09 310.57 L524.17 305.94 L525.23 301.46 L526.26 297.12 L527.26 292.93 L528.25 288.87 L529.22 284.96 L530.17 281.19 L531.11 277.56 L532.02 274.07 L532.93 270.73 L533.82 267.53 L534.70 264.47 L535.57 261.55 L536.43 258.78 L537.28 256.15 L538.13 253.66 L538.96 251.31 L539.80 249.11 L540.62 247.04 L541.44 245.12 L542.26 243.34 L543.07 241.71 L543.88 240.21 L544.69 238.86 L545.49 237.65 L546.29 236.59 L547.10 235.66 L547.90 234.88 L548.70 234.24 L549.50 233.74 L550.30 233.38 L551.10 233.17 L551.90 233.10 L551.90 233.10 L552.70 233.17 L553.50 233.38 L554.30 233.74 L555.10 234.24 L555.90 234.88 L556.70 235.66 L557.51 236.59 L558.31 237.65 L559.11 238.86 L559.92 240.21 L560.73 241.71 L561.54 243.34 L562.36 245.12 L563.18 247.04 L564.00 249.11 L564.84 251.31 L565.67 253.66 L566.52 256.15 L567.37 258.78 L568.23 261.55 L569.10 264.47 L569.98 267.53 L570.87 270.73 L571.78 274.07 L572.69 277.56 L573.63 281.19 L574.58 284.96 L575.55 288.87 L576.54 292.93 L577.54 297.12 L578.57 301.46 L579.63 305.94 L580.71 310.57 L581.81 315.33 L582.94 320.24 L584.11 325.29 L585.30 330.49 L586.53 335.82 L587.79 341.30 L589.09 346.92 L590.43 352.68 L591.80 358.59 L593.23 364.63 L594.69 370.82 L596.21 377.15 L597.77 383.63 L599.38 390.24 L601.05 397.00Z" fill="url(#cmap)"/><path d="M502.75 397.00 L504.42 390.24 L506.03 383.63 L507.59 377.15 L509.11 370.82 L510.57 364.63 L512.00 358.59 L513.37 352.68 L514.71 346.92 L516.01 341.30 L517.27 335.82 L518.50 330.49 L519.69 325.29 L520.86 320.24 L521.99 315.33 L523.09 310.57 L524.17 305.94 L525.23 301.46 L526.26 297.12 L527.26 292.93 L528.25 288.87 L529.22 284.96 L530.17 281.19 L531.11 277.56 L532.02 274.07 L532.93 270.73 L533.82 267.53 L534.70 264.47 L535.57 261.55 L536.43 258.78 L537.28 256.15 L538.13 253.66 L538.96 251.31 L539.80 249.11 L540.62 247.04 L541.44 245.12 L542.26 243.34 L543.07 241.71 L543.88 240.21 L544.69 238.86 L545.49 237.65 L546.29 236.59 L547.10 235.66 L547.90 234.88 L548.70 234.24 L549.50 233.74 L550.30 233.38 L551.10 233.17 L551.90 233.10 L551.90 233.10 L552.70 233.17 L553.50 233.38 L554.30 233.74 L555.10 234.24 L555.90 234.88 L556.70 235.66 L557.51 236.59 L558.31 237.65 L559.11 238.86 L559.92 240.21 L560.73 241.71 L561.54 243.34 L562.36 245.12 L563.18 247.04 L564.00 249.11 L564.84 251.31 L565.67 253.66 L566.52 256.15 L567.37 258.78 L568.23 261.55 L569.10 264.47 L569.98 267.53 L570.87 270.73 L571.78 274.07 L572.69 277.56 L573.63 281.19 L574.58 284.96 L575.55 288.87 L576.54 292.93 L577.54 297.12 L578.57 301.46 L579.63 305.94 L580.71 310.57 L581.81 315.33 L582.94 320.24 L584.11 325.29 L585.30 330.49 L586.53 335.82 L587.79 341.30 L589.09 346.92 L590.43 352.68 L591.80 358.59 L593.23 364.63 L594.69 370.82 L596.21 377.15 L597.77 383.63 L599.38 390.24 L601.05 397.00Z" fill="url(#shade)" mask="url(#fade)"/><path d="M435.79 397.00 L438.33 390.18 L440.78 383.50 L443.12 376.96 L445.36 370.57 L447.51 364.32 L449.58 358.21 L451.56 352.25 L453.46 346.43 L455.28 340.76 L457.03 335.22 L458.72 329.84 L460.33 324.59 L461.89 319.49 L463.39 314.54 L464.83 309.72 L466.22 305.06 L467.56 300.53 L468.85 296.15 L470.11 291.91 L471.32 287.82 L472.49 283.87 L473.63 280.06 L474.74 276.39 L475.82 272.88 L476.87 269.50 L477.90 266.27 L478.90 263.18 L479.88 260.23 L480.84 257.43 L481.79 254.77 L482.72 252.26 L483.63 249.89 L484.54 247.66 L485.43 245.58 L486.31 243.64 L487.19 241.84 L488.06 240.19 L488.92 238.68 L489.78 237.32 L490.63 236.10 L491.48 235.02 L492.33 234.09 L493.18 233.30 L494.02 232.65 L494.87 232.15 L495.71 231.79 L496.56 231.57 L497.40 231.50 L497.40 231.50 L498.24 231.57 L499.09 231.79 L499.93 232.15 L500.78 232.65 L501.62 233.30 L502.47 234.09 L503.32 235.02 L504.17 236.10 L505.02 237.32 L505.88 238.68 L506.74 240.19 L507.61 241.84 L508.49 243.64 L509.37 245.58 L510.26 247.66 L511.17 249.89 L512.08 252.26 L513.01 254.77 L513.96 257.43 L514.92 260.23 L515.90 263.18 L516.90 266.27 L517.93 269.50 L518.98 272.88 L520.06 276.39 L521.17 280.06 L522.31 283.87 L523.48 287.82 L524.69 291.91 L525.95 296.15 L527.24 300.53 L528.58 305.06 L529.97 309.72 L531.41 314.54 L532.91 319.49 L534.47 324.59 L536.08 329.84 L537.77 335.22 L539.52 340.76 L541.34 346.43 L543.24 352.25 L545.22 358.21 L547.29 364.32 L549.44 370.57 L551.68 376.96 L554.02 383.50 L556.47 390.18 L559.01 397.00Z" fill="url(#cmap)"/><path d="M435.79 397.00 L438.33 390.18 L440.78 383.50 L443.12 376.96 L445.36 370.57 L447.51 364.32 L449.58 358.21 L451.56 352.25 L453.46 346.43 L455.28 340.76 L457.03 335.22 L458.72 329.84 L460.33 324.59 L461.89 319.49 L463.39 314.54 L464.83 309.72 L466.22 305.06 L467.56 300.53 L468.85 296.15 L470.11 291.91 L471.32 287.82 L472.49 283.87 L473.63 280.06 L474.74 276.39 L475.82 272.88 L476.87 269.50 L477.90 266.27 L478.90 263.18 L479.88 260.23 L480.84 257.43 L481.79 254.77 L482.72 252.26 L483.63 249.89 L484.54 247.66 L485.43 245.58 L486.31 243.64 L487.19 241.84 L488.06 240.19 L488.92 238.68 L489.78 237.32 L490.63 236.10 L491.48 235.02 L492.33 234.09 L493.18 233.30 L494.02 232.65 L494.87 232.15 L495.71 231.79 L496.56 231.57 L497.40 231.50 L497.40 231.50 L498.24 231.57 L499.09 231.79 L499.93 232.15 L500.78 232.65 L501.62 233.30 L502.47 234.09 L503.32 235.02 L504.17 236.10 L505.02 237.32 L505.88 238.68 L506.74 240.19 L507.61 241.84 L508.49 243.64 L509.37 245.58 L510.26 247.66 L511.17 249.89 L512.08 252.26 L513.01 254.77 L513.96 257.43 L514.92 260.23 L515.90 263.18 L516.90 266.27 L517.93 269.50 L518.98 272.88 L520.06 276.39 L521.17 280.06 L522.31 283.87 L523.48 287.82 L524.69 291.91 L525.95 296.15 L527.24 300.53 L528.58 305.06 L529.97 309.72 L531.41 314.54 L532.91 319.49 L534.47 324.59 L536.08 329.84 L537.77 335.22 L539.52 340.76 L541.34 346.43 L543.24 352.25 L545.22 358.21 L547.29 364.32 L549.44 370.57 L551.68 376.96 L554.02 383.50 L556.47 390.18 L559.01 397.00Z" fill="url(#shade)" mask="url(#fade)"/><clipPath id="pc0"><path d="M393.72 397.00 L395.38 390.27 L396.99 383.68 L398.54 377.24 L400.05 370.93 L401.51 364.77 L402.92 358.75 L404.29 352.87 L405.62 347.13 L406.92 341.54 L408.17 336.08 L409.40 330.77 L410.59 325.60 L411.74 320.57 L412.87 315.68 L413.97 310.94 L415.05 306.33 L416.10 301.87 L417.12 297.55 L418.13 293.37 L419.11 289.33 L420.08 285.44 L421.02 281.68 L421.96 278.07 L422.87 274.60 L423.77 271.27 L424.66 268.08 L425.54 265.04 L426.41 262.13 L427.27 259.37 L428.12 256.75 L428.96 254.27 L429.79 251.93 L430.62 249.74 L431.44 247.68 L432.26 245.77 L433.08 244.00 L433.89 242.37 L434.70 240.88 L435.50 239.54 L436.30 238.33 L437.11 237.27 L437.91 236.35 L438.71 235.57 L439.51 234.93 L440.30 234.44 L441.10 234.08 L441.90 233.87 L442.70 233.80 L442.70 233.80 L443.50 233.87 L444.30 234.08 L445.10 234.44 L445.89 234.93 L446.69 235.57 L447.49 236.35 L448.29 237.27 L449.10 238.33 L449.90 239.54 L450.70 240.88 L451.51 242.37 L452.32 244.00 L453.14 245.77 L453.96 247.68 L454.78 249.74 L455.61 251.93 L456.44 254.27 L457.28 256.75 L458.13 259.37 L458.99 262.13 L459.86 265.04 L460.74 268.08 L461.63 271.27 L462.53 274.60 L463.44 278.07 L464.38 281.68 L465.32 285.44 L466.29 289.33 L467.27 293.37 L468.28 297.55 L469.30 301.87 L470.35 306.33 L471.43 310.94 L472.53 315.68 L473.66 320.57 L474.81 325.60 L476.00 330.77 L477.23 336.08 L478.48 341.54 L479.78 347.13 L481.11 352.87 L482.48 358.75 L483.89 364.77 L485.35 370.93 L486.86 377.24 L488.41 383.68 L490.02 390.27 L491.68 397.00Z"/></clipPath><g clip-path="url(#pc0)"><path d="M437.1 253.2 Q408.3 325.1 396.0 397" stroke="#000" stroke-width="0.6" fill="none" opacity="0.05"/><path d="M438.0 252.1 Q414.9 324.5 404.9 397" stroke="#000" stroke-width="0.6" fill="none" opacity="0.04"/><path d="M438.8 250.9 Q419.6 324.0 411.3 397" stroke="#000" stroke-width="0.6" fill="none" opacity="0.06"/><path d="M439.7 249.8 Q422.7 323.4 415.4 397" stroke="#000" stroke-width="0.6" fill="none" opacity="0.07"/><path d="M440.6 248.7 Q427.8 322.8 422.4 397" stroke="#000" stroke-width="0.6" fill="none" opacity="0.06"/><path d="M441.4 247.5 Q433.1 322.3 429.6 397" stroke="#000" stroke-width="0.6" fill="none" opacity="0.04"/><path d="M442.3 246.4 Q439.8 321.7 438.7 397" stroke="#000" stroke-width="0.6" fill="none" opacity="0.08"/><path d="M443.1 246.4 Q443.7 321.7 444.0 397" stroke="#000" stroke-width="0.6" fill="none" opacity="0.05"/><path d="M444.0 247.5 Q451.0 322.3 454.0 397" stroke="#000" stroke-width="0.6" fill="none" opacity="0.09"/><path d="M444.8 248.7 Q456.0 322.8 460.7 397" stroke="#000" stroke-width="0.6" fill="none" opacity="0.06"/><path d="M445.7 249.8 Q462.8 323.4 470.2 397" stroke="#000" stroke-width="0.6" fill="none" opacity="0.04"/><path d="M446.6 250.9 Q467.5 324.0 476.5 397" stroke="#000" stroke-width="0.6" fill="none" opacity="0.05"/><path d="M447.4 252.1 Q469.7 324.5 479.2 397" stroke="#000" stroke-width="0.6" fill="none" opacity="0.05"/><path d="M448.3 253.2 Q475.5 325.1 487.2 397" stroke="#000" stroke-width="0.6" fill="none" opacity="0.08"/></g><clipPath id="pc1"><path d="M502.75 397.00 L504.42 390.24 L506.03 383.63 L507.59 377.15 L509.11 370.82 L510.57 364.63 L512.00 358.59 L513.37 352.68 L514.71 346.92 L516.01 341.30 L517.27 335.82 L518.50 330.49 L519.69 325.29 L520.86 320.24 L521.99 315.33 L523.09 310.57 L524.17 305.94 L525.23 301.46 L526.26 297.12 L527.26 292.93 L528.25 288.87 L529.22 284.96 L530.17 281.19 L531.11 277.56 L532.02 274.07 L532.93 270.73 L533.82 267.53 L534.70 264.47 L535.57 261.55 L536.43 258.78 L537.28 256.15 L538.13 253.66 L538.96 251.31 L539.80 249.11 L540.62 247.04 L541.44 245.12 L542.26 243.34 L543.07 241.71 L543.88 240.21 L544.69 238.86 L545.49 237.65 L546.29 236.59 L547.10 235.66 L547.90 234.88 L548.70 234.24 L549.50 233.74 L550.30 233.38 L551.10 233.17 L551.90 233.10 L551.90 233.10 L552.70 233.17 L553.50 233.38 L554.30 233.74 L555.10 234.24 L555.90 234.88 L556.70 235.66 L557.51 236.59 L558.31 237.65 L559.11 238.86 L559.92 240.21 L560.73 241.71 L561.54 243.34 L562.36 245.12 L563.18 247.04 L564.00 249.11 L564.84 251.31 L565.67 253.66 L566.52 256.15 L567.37 258.78 L568.23 261.55 L569.10 264.47 L569.98 267.53 L570.87 270.73 L571.78 274.07 L572.69 277.56 L573.63 281.19 L574.58 284.96 L575.55 288.87 L576.54 292.93 L577.54 297.12 L578.57 301.46 L579.63 305.94 L580.71 310.57 L581.81 315.33 L582.94 320.24 L584.11 325.29 L585.30 330.49 L586.53 335.82 L587.79 341.30 L589.09 346.92 L590.43 352.68 L591.80 358.59 L593.23 364.63 L594.69 370.82 L596.21 377.15 L597.77 383.63 L599.38 390.24 L601.05 397.00Z"/></clipPath><g clip-path="url(#pc1)"><path d="M546.3 252.5 Q516.9 324.8 504.3 397" stroke="#000" stroke-width="0.6" fill="none" opacity="0.07"/><path d="M547.2 251.4 Q524.0 324.2 514.1 397" stroke="#000" stroke-width="0.6" fill="none" opacity="0.06"/><path d="M548.0 250.2 Q528.8 323.6 520.6 397" stroke="#000" stroke-width="0.6" fill="none" opacity="0.04"/><path d="M548.9 249.1 Q531.9 323.1 524.7 397" stroke="#000" stroke-width="0.6" fill="none" opacity="0.05"/><path d="M549.8 248.0 Q539.7 322.5 535.4 397" stroke="#000" stroke-width="0.6" fill="none" opacity="0.06"/><path d="M550.6 246.8 Q543.4 321.9 540.2 397" stroke="#000" stroke-width="0.6" fill="none" opacity="0.07"/><path d="M551.5 245.7 Q549.1 321.3 548.1 397" stroke="#000" stroke-width="0.6" fill="none" opacity="0.05"/><path d="M552.3 245.7 Q555.7 321.3 557.2 397" stroke="#000" stroke-width="0.6" fill="none" opacity="0.07"/><path d="M553.2 246.8 Q558.6 321.9 560.9 397" stroke="#000" stroke-width="0.6" fill="none" opacity="0.07"/><path d="M554.0 248.0 Q564.9 322.5 569.6 397" stroke="#000" stroke-width="0.6" fill="none" opacity="0.08"/><path d="M554.9 249.1 Q571.0 323.1 577.9 397" stroke="#000" stroke-width="0.6" fill="none" opacity="0.05"/><path d="M555.8 250.2 Q577.2 323.6 586.4 397" stroke="#000" stroke-width="0.6" fill="none" opacity="0.05"/><path d="M556.6 251.4 Q580.0 324.2 590.1 397" stroke="#000" stroke-width="0.6" fill="none" opacity="0.08"/><path d="M557.5 252.5 Q584.1 324.8 595.5 397" stroke="#000" stroke-width="0.6" fill="none" opacity="0.06"/></g><clipPath id="pc2"><path d="M435.79 397.00 L438.33 390.18 L440.78 383.50 L443.12 376.96 L445.36 370.57 L447.51 364.32 L449.58 358.21 L451.56 352.25 L453.46 346.43 L455.28 340.76 L457.03 335.22 L458.72 329.84 L460.33 324.59 L461.89 319.49 L463.39 314.54 L464.83 309.72 L466.22 305.06 L467.56 300.53 L468.85 296.15 L470.11 291.91 L471.32 287.82 L472.49 283.87 L473.63 280.06 L474.74 276.39 L475.82 272.88 L476.87 269.50 L477.90 266.27 L478.90 263.18 L479.88 260.23 L480.84 257.43 L481.79 254.77 L482.72 252.26 L483.63 249.89 L484.54 247.66 L485.43 245.58 L486.31 243.64 L487.19 241.84 L488.06 240.19 L488.92 238.68 L489.78 237.32 L490.63 236.10 L491.48 235.02 L492.33 234.09 L493.18 233.30 L494.02 232.65 L494.87 232.15 L495.71 231.79 L496.56 231.57 L497.40 231.50 L497.40 231.50 L498.24 231.57 L499.09 231.79 L499.93 232.15 L500.78 232.65 L501.62 233.30 L502.47 234.09 L503.32 235.02 L504.17 236.10 L505.02 237.32 L505.88 238.68 L506.74 240.19 L507.61 241.84 L508.49 243.64 L509.37 245.58 L510.26 247.66 L511.17 249.89 L512.08 252.26 L513.01 254.77 L513.96 257.43 L514.92 260.23 L515.90 263.18 L516.90 266.27 L517.93 269.50 L518.98 272.88 L520.06 276.39 L521.17 280.06 L522.31 283.87 L523.48 287.82 L524.69 291.91 L525.95 296.15 L527.24 300.53 L528.58 305.06 L529.97 309.72 L531.41 314.54 L532.91 319.49 L534.47 324.59 L536.08 329.84 L537.77 335.22 L539.52 340.76 L541.34 346.43 L543.24 352.25 L545.22 358.21 L547.29 364.32 L549.44 370.57 L551.68 376.96 L554.02 383.50 L556.47 390.18 L559.01 397.00Z"/></clipPath><g clip-path="url(#pc2)"><path d="M491.8 250.9 Q454.1 324.0 437.9 397" stroke="#000" stroke-width="0.6" fill="none" opacity="0.07"/><path d="M492.7 249.8 Q463.5 323.4 451.0 397" stroke="#000" stroke-width="0.6" fill="none" opacity="0.07"/><path d="M493.5 248.6 Q470.3 322.8 460.4 397" stroke="#000" stroke-width="0.6" fill="none" opacity="0.06"/><path d="M494.4 247.5 Q475.9 322.2 468.0 397" stroke="#000" stroke-width="0.6" fill="none" opacity="0.07"/><path d="M495.3 246.4 Q481.8 321.7 476.1 397" stroke="#000" stroke-width="0.6" fill="none" opacity="0.06"/><path d="M496.1 245.2 Q489.3 321.1 486.3 397" stroke="#000" stroke-width="0.6" fill="none" opacity="0.09"/><path d="M497.0 244.1 Q494.1 320.5 492.9 397" stroke="#000" stroke-width="0.6" fill="none" opacity="0.07"/><path d="M497.8 244.1 Q498.7 320.5 499.1 397" stroke="#000" stroke-width="0.6" fill="none" opacity="0.08"/><path d="M498.7 245.2 Q507.6 321.1 511.4 397" stroke="#000" stroke-width="0.6" fill="none" opacity="0.09"/><path d="M499.5 246.4 Q514.7 321.7 521.2 397" stroke="#000" stroke-width="0.6" fill="none" opacity="0.05"/><path d="M500.4 247.5 Q519.2 322.2 527.3 397" stroke="#000" stroke-width="0.6" fill="none" opacity="0.07"/><path d="M501.3 248.6 Q524.1 322.8 533.8 397" stroke="#000" stroke-width="0.6" fill="none" opacity="0.06"/><path d="M502.1 249.8 Q531.0 323.4 543.4 397" stroke="#000" stroke-width="0.6" fill="none" opacity="0.05"/><path d="M503.0 250.9 Q536.9 324.0 551.5 397" stroke="#000" stroke-width="0.6" fill="none" opacity="0.08"/></g><path d="M351.2 398.8 L642.8 398.8" stroke="#0a3590" stroke-width="1.6"/><path d="M392 358.2 L605 358.2" stroke="#0d5a6a" stroke-width="0.8" opacity="0.5"/></svg>
<div class="t" style="left:698.40px;top:380.26px;font-size:16px;color:#111;font-weight:normal;letter-spacing:0px;transform:scaleX(0.865);transform-origin:0 0;-webkit-text-stroke:0.2px #111;">E_4, E_5</div>
<div class="t" style="left:698.40px;top:400.26px;font-size:16px;color:#111;font-weight:normal;letter-spacing:0px;transform:scaleX(0.865);transform-origin:0 0;-webkit-text-stroke:0.2px #111;">E_2, E_3</div>
<div class="t" style="left:702.50px;top:421.86px;font-size:16px;color:#111;font-weight:normal;letter-spacing:0px;transform:scaleX(0.865);transform-origin:0 0;-webkit-text-stroke:0.2px #111;">E_1</div>
<div class="r" style="left:699.20px;top:416.50px;width:30.60px;height:23.70px;box-shadow:inset 0 0 0 1.8px #f2c23c"></div>
<svg class="r" style="left:0;top:0" width="1024" height="479"><path d="M740 429L959 384.5" stroke="#000" stroke-width="1.8"/></svg>
</div>
</body></html>
